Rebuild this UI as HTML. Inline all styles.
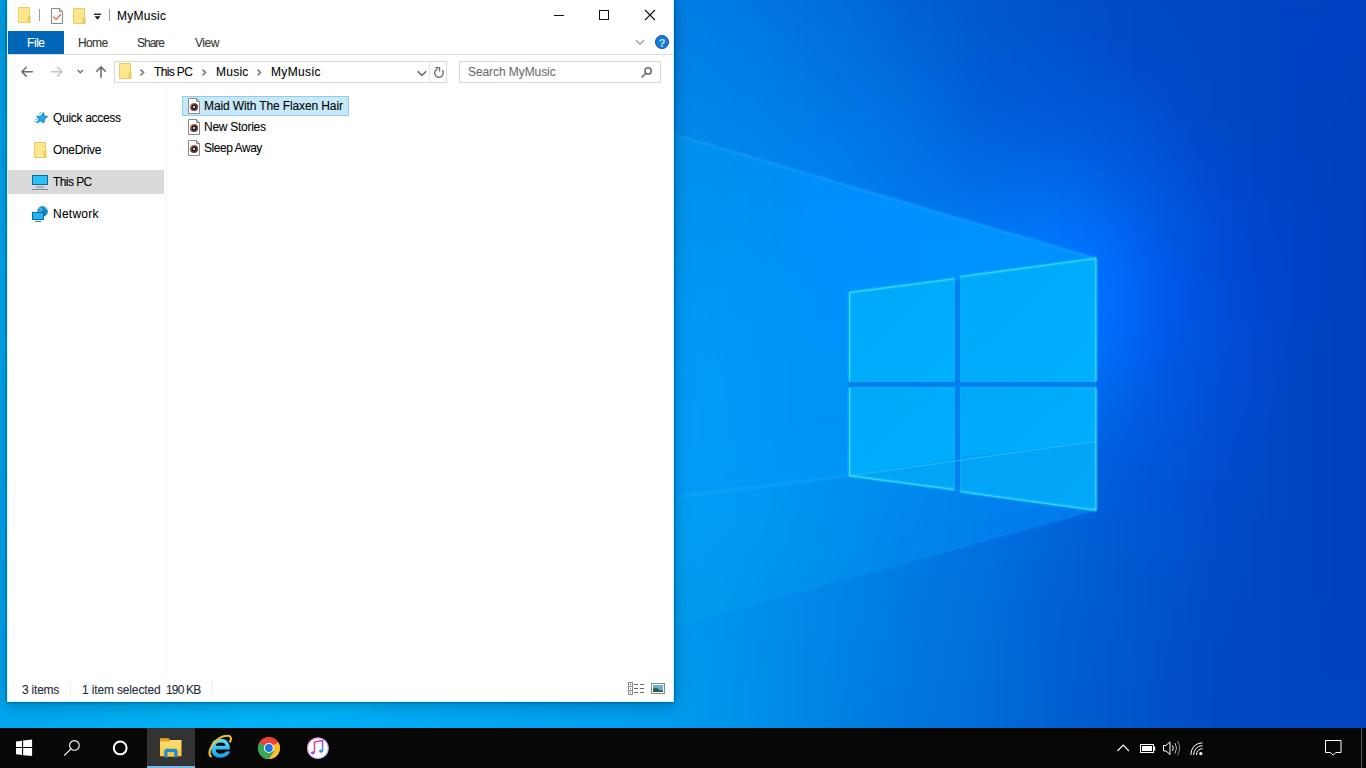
<!DOCTYPE html>
<html><head><meta charset="utf-8">
<style>
*{margin:0;padding:0;box-sizing:border-box}
html,body{width:1366px;height:768px;overflow:hidden;background:#0060d0}
body{position:relative;font-family:"Liberation Sans",sans-serif;font-size:12px;color:#000}
.a{position:absolute}
.t{position:absolute;white-space:nowrap;line-height:14px;font-size:12px;-webkit-text-stroke:0.08px currentColor}
#wall{position:absolute;left:0;top:0;width:1366px;height:728px}
#win{position:absolute;left:7px;top:-1px;width:667px;height:703px;background:#fff;border:1px solid #c8faff;box-shadow:0 0 2px 1px rgba(0,40,80,.38),0 3px 16px rgba(0,0,0,.26)}
#tb{position:absolute;left:0;top:728px;width:1366px;height:40px;background:#070707}
</style></head><body>
<svg id="wall" width="1366" height="728" viewBox="0 0 1366 728">
<defs>
<clipPath id="beamclip"><polygon points="-10,-65 1096,258.3 1096,510.4 849.9,475.8 -10,580"/></clipPath>
<clipPath id="wedgeclip"><polygon points="849.9,475.8 1096,510.4 -10,813 -10,580"/></clipPath>
<filter id="fblur" x="0" y="0" width="1366" height="728" filterUnits="userSpaceOnUse"><feGaussianBlur stdDeviation="18" edgeMode="duplicate"/></filter>
<linearGradient id="pane" x1="0" y1="0" x2="1" y2="1">
<stop offset="0" stop-color="#00a8f8"/>
<stop offset="1" stop-color="#00b0fe"/>
</linearGradient>
<filter id="b1" x="-20%" y="-20%" width="140%" height="140%"><feGaussianBlur stdDeviation="1.2"/></filter>
<filter id="b2" x="-20%" y="-20%" width="140%" height="140%"><feGaussianBlur stdDeviation="2.5"/></filter>
</defs>
<g filter="url(#fblur)"><rect x="-40" y="-40" width="40" height="40" fill="#0093ec"/><rect x="0" y="-40" width="40" height="40" fill="#0091eb"/><rect x="40" y="-40" width="40" height="40" fill="#0090ea"/><rect x="80" y="-40" width="40" height="40" fill="#008ee9"/><rect x="120" y="-40" width="40" height="40" fill="#008de9"/><rect x="160" y="-40" width="40" height="40" fill="#008ce8"/><rect x="200" y="-40" width="40" height="40" fill="#008ae8"/><rect x="240" y="-40" width="40" height="40" fill="#008ae7"/><rect x="280" y="-40" width="40" height="40" fill="#0089e7"/><rect x="320" y="-40" width="40" height="40" fill="#0088e6"/><rect x="360" y="-40" width="40" height="40" fill="#0087e6"/><rect x="400" y="-40" width="40" height="40" fill="#0086e6"/><rect x="440" y="-40" width="40" height="40" fill="#0086e6"/><rect x="480" y="-40" width="40" height="40" fill="#0084e5"/><rect x="520" y="-40" width="40" height="40" fill="#0083e5"/><rect x="560" y="-40" width="40" height="40" fill="#0081e5"/><rect x="600" y="-40" width="40" height="40" fill="#007fe5"/><rect x="640" y="-40" width="40" height="40" fill="#007de4"/><rect x="680" y="-40" width="40" height="40" fill="#007ae3"/><rect x="720" y="-40" width="40" height="40" fill="#0076e2"/><rect x="760" y="-40" width="40" height="40" fill="#0071e0"/><rect x="800" y="-40" width="40" height="40" fill="#006cdd"/><rect x="840" y="-40" width="40" height="40" fill="#0067da"/><rect x="880" y="-40" width="40" height="40" fill="#0061d6"/><rect x="920" y="-40" width="40" height="40" fill="#005cd3"/><rect x="960" y="-40" width="40" height="40" fill="#0057cf"/><rect x="1000" y="-40" width="40" height="40" fill="#0052cc"/><rect x="1040" y="-40" width="40" height="40" fill="#004eca"/><rect x="1080" y="-40" width="40" height="40" fill="#004bc8"/><rect x="1120" y="-40" width="40" height="40" fill="#0049c6"/><rect x="1160" y="-40" width="40" height="40" fill="#0047c5"/><rect x="1200" y="-40" width="40" height="40" fill="#0045c4"/><rect x="1240" y="-40" width="40" height="40" fill="#0043c4"/><rect x="1280" y="-40" width="40" height="40" fill="#0042c3"/><rect x="1320" y="-40" width="40" height="40" fill="#0040c2"/><rect x="1360" y="-40" width="40" height="40" fill="#003fc1"/><rect x="1400" y="-40" width="40" height="40" fill="#003cbe"/><rect x="-40" y="0" width="40" height="40" fill="#0095ed"/><rect x="0" y="0" width="40" height="40" fill="#0094ec"/><rect x="40" y="0" width="40" height="40" fill="#0092eb"/><rect x="80" y="0" width="40" height="40" fill="#0090ea"/><rect x="120" y="0" width="40" height="40" fill="#008fea"/><rect x="160" y="0" width="40" height="40" fill="#008ee9"/><rect x="200" y="0" width="40" height="40" fill="#008de8"/><rect x="240" y="0" width="40" height="40" fill="#008ce8"/><rect x="280" y="0" width="40" height="40" fill="#008be8"/><rect x="320" y="0" width="40" height="40" fill="#008be7"/><rect x="360" y="0" width="40" height="40" fill="#008ae7"/><rect x="400" y="0" width="40" height="40" fill="#0189e7"/><rect x="440" y="0" width="40" height="40" fill="#0188e7"/><rect x="480" y="0" width="40" height="40" fill="#0187e6"/><rect x="520" y="0" width="40" height="40" fill="#0186e6"/><rect x="560" y="0" width="40" height="40" fill="#0185e6"/><rect x="600" y="0" width="40" height="40" fill="#0183e6"/><rect x="640" y="0" width="40" height="40" fill="#0081e6"/><rect x="680" y="0" width="40" height="40" fill="#007ee5"/><rect x="720" y="0" width="40" height="40" fill="#007ae4"/><rect x="760" y="0" width="40" height="40" fill="#0075e2"/><rect x="800" y="0" width="40" height="40" fill="#0070e0"/><rect x="840" y="0" width="40" height="40" fill="#006bdd"/><rect x="880" y="0" width="40" height="40" fill="#0064d9"/><rect x="920" y="0" width="40" height="40" fill="#005ed5"/><rect x="960" y="0" width="40" height="40" fill="#0059d1"/><rect x="1000" y="0" width="40" height="40" fill="#0054ce"/><rect x="1040" y="0" width="40" height="40" fill="#0050cc"/><rect x="1080" y="0" width="40" height="40" fill="#004dca"/><rect x="1120" y="0" width="40" height="40" fill="#004ac8"/><rect x="1160" y="0" width="40" height="40" fill="#0048c6"/><rect x="1200" y="0" width="40" height="40" fill="#0046c5"/><rect x="1240" y="0" width="40" height="40" fill="#0044c4"/><rect x="1280" y="0" width="40" height="40" fill="#0042c4"/><rect x="1320" y="0" width="40" height="40" fill="#0041c3"/><rect x="1360" y="0" width="40" height="40" fill="#003fc1"/><rect x="1400" y="0" width="40" height="40" fill="#003cbe"/><rect x="-40" y="40" width="40" height="40" fill="#0098ee"/><rect x="0" y="40" width="40" height="40" fill="#0096ed"/><rect x="40" y="40" width="40" height="40" fill="#0094ec"/><rect x="80" y="40" width="40" height="40" fill="#0093eb"/><rect x="120" y="40" width="40" height="40" fill="#0091ea"/><rect x="160" y="40" width="40" height="40" fill="#0090ea"/><rect x="200" y="40" width="40" height="40" fill="#008fe9"/><rect x="240" y="40" width="40" height="40" fill="#008ee9"/><rect x="280" y="40" width="40" height="40" fill="#018ee9"/><rect x="320" y="40" width="40" height="40" fill="#018de8"/><rect x="360" y="40" width="40" height="40" fill="#018de8"/><rect x="400" y="40" width="40" height="40" fill="#028ce8"/><rect x="440" y="40" width="40" height="40" fill="#028be8"/><rect x="480" y="40" width="40" height="40" fill="#028ae7"/><rect x="520" y="40" width="40" height="40" fill="#0389e7"/><rect x="560" y="40" width="40" height="40" fill="#0388e7"/><rect x="600" y="40" width="40" height="40" fill="#0386e7"/><rect x="640" y="40" width="40" height="40" fill="#0284e6"/><rect x="680" y="40" width="40" height="40" fill="#0281e6"/><rect x="720" y="40" width="40" height="40" fill="#017de6"/><rect x="760" y="40" width="40" height="40" fill="#0079e5"/><rect x="800" y="40" width="40" height="40" fill="#0074e3"/><rect x="840" y="40" width="40" height="40" fill="#006ee0"/><rect x="880" y="40" width="40" height="40" fill="#0068dc"/><rect x="920" y="40" width="40" height="40" fill="#0062d8"/><rect x="960" y="40" width="40" height="40" fill="#005bd4"/><rect x="1000" y="40" width="40" height="40" fill="#0057d1"/><rect x="1040" y="40" width="40" height="40" fill="#0053cf"/><rect x="1080" y="40" width="40" height="40" fill="#0050cd"/><rect x="1120" y="40" width="40" height="40" fill="#004cca"/><rect x="1160" y="40" width="40" height="40" fill="#0049c7"/><rect x="1200" y="40" width="40" height="40" fill="#0046c5"/><rect x="1240" y="40" width="40" height="40" fill="#0044c4"/><rect x="1280" y="40" width="40" height="40" fill="#0042c3"/><rect x="1320" y="40" width="40" height="40" fill="#0040c2"/><rect x="1360" y="40" width="40" height="40" fill="#003ec0"/><rect x="1400" y="40" width="40" height="40" fill="#003cbe"/><rect x="-40" y="80" width="40" height="40" fill="#009aee"/><rect x="0" y="80" width="40" height="40" fill="#0098ee"/><rect x="40" y="80" width="40" height="40" fill="#0097ed"/><rect x="80" y="80" width="40" height="40" fill="#0095ec"/><rect x="120" y="80" width="40" height="40" fill="#0094eb"/><rect x="160" y="80" width="40" height="40" fill="#0093eb"/><rect x="200" y="80" width="40" height="40" fill="#0092ea"/><rect x="240" y="80" width="40" height="40" fill="#0191ea"/><rect x="280" y="80" width="40" height="40" fill="#0190ea"/><rect x="320" y="80" width="40" height="40" fill="#0290e9"/><rect x="360" y="80" width="40" height="40" fill="#028fe9"/><rect x="400" y="80" width="40" height="40" fill="#038fe9"/><rect x="440" y="80" width="40" height="40" fill="#038ee9"/><rect x="480" y="80" width="40" height="40" fill="#038de8"/><rect x="520" y="80" width="40" height="40" fill="#048ce8"/><rect x="560" y="80" width="40" height="40" fill="#048be8"/><rect x="600" y="80" width="40" height="40" fill="#0489e7"/><rect x="640" y="80" width="40" height="40" fill="#0487e7"/><rect x="680" y="80" width="40" height="40" fill="#0484e7"/><rect x="720" y="80" width="40" height="40" fill="#0381e7"/><rect x="760" y="80" width="40" height="40" fill="#007de8"/><rect x="800" y="80" width="40" height="40" fill="#0078e7"/><rect x="840" y="80" width="40" height="40" fill="#0073e4"/><rect x="880" y="80" width="40" height="40" fill="#006de0"/><rect x="920" y="80" width="40" height="40" fill="#0066db"/><rect x="960" y="80" width="40" height="40" fill="#005fd8"/><rect x="1000" y="80" width="40" height="40" fill="#005bd6"/><rect x="1040" y="80" width="40" height="40" fill="#0057d5"/><rect x="1080" y="80" width="40" height="40" fill="#0054d2"/><rect x="1120" y="80" width="40" height="40" fill="#0050ce"/><rect x="1160" y="80" width="40" height="40" fill="#004bca"/><rect x="1200" y="80" width="40" height="40" fill="#0047c6"/><rect x="1240" y="80" width="40" height="40" fill="#0044c4"/><rect x="1280" y="80" width="40" height="40" fill="#0042c3"/><rect x="1320" y="80" width="40" height="40" fill="#0040c1"/><rect x="1360" y="80" width="40" height="40" fill="#003ebf"/><rect x="1400" y="80" width="40" height="40" fill="#003bbd"/><rect x="-40" y="120" width="40" height="40" fill="#009cef"/><rect x="0" y="120" width="40" height="40" fill="#009bef"/><rect x="40" y="120" width="40" height="40" fill="#0099ee"/><rect x="80" y="120" width="40" height="40" fill="#0098ed"/><rect x="120" y="120" width="40" height="40" fill="#0096ec"/><rect x="160" y="120" width="40" height="40" fill="#0095ec"/><rect x="200" y="120" width="40" height="40" fill="#0194eb"/><rect x="240" y="120" width="40" height="40" fill="#0194eb"/><rect x="280" y="120" width="40" height="40" fill="#0293eb"/><rect x="320" y="120" width="40" height="40" fill="#0293ea"/><rect x="360" y="120" width="40" height="40" fill="#0392ea"/><rect x="400" y="120" width="40" height="40" fill="#0391ea"/><rect x="440" y="120" width="40" height="40" fill="#0491ea"/><rect x="480" y="120" width="40" height="40" fill="#0490e9"/><rect x="520" y="120" width="40" height="40" fill="#058fe9"/><rect x="560" y="120" width="40" height="40" fill="#058ee9"/><rect x="600" y="120" width="40" height="40" fill="#058ce9"/><rect x="640" y="120" width="40" height="40" fill="#068ae8"/><rect x="680" y="120" width="40" height="40" fill="#0588e9"/><rect x="720" y="120" width="40" height="40" fill="#0384ea"/><rect x="760" y="120" width="40" height="40" fill="#0081ed"/><rect x="800" y="120" width="40" height="40" fill="#007deb"/><rect x="840" y="120" width="40" height="40" fill="#0078e8"/><rect x="880" y="120" width="40" height="40" fill="#0072e4"/><rect x="920" y="120" width="40" height="40" fill="#006be0"/><rect x="960" y="120" width="40" height="40" fill="#0065dd"/><rect x="1000" y="120" width="40" height="40" fill="#0061dd"/><rect x="1040" y="120" width="40" height="40" fill="#005edd"/><rect x="1080" y="120" width="40" height="40" fill="#005ada"/><rect x="1120" y="120" width="40" height="40" fill="#0054d5"/><rect x="1160" y="120" width="40" height="40" fill="#004ece"/><rect x="1200" y="120" width="40" height="40" fill="#0049c8"/><rect x="1240" y="120" width="40" height="40" fill="#0045c5"/><rect x="1280" y="120" width="40" height="40" fill="#0042c3"/><rect x="1320" y="120" width="40" height="40" fill="#003fc0"/><rect x="1360" y="120" width="40" height="40" fill="#003dbe"/><rect x="1400" y="120" width="40" height="40" fill="#003bbc"/><rect x="-40" y="160" width="40" height="40" fill="#009ff0"/><rect x="0" y="160" width="40" height="40" fill="#009def"/><rect x="40" y="160" width="40" height="40" fill="#009cef"/><rect x="80" y="160" width="40" height="40" fill="#009aee"/><rect x="120" y="160" width="40" height="40" fill="#0099ed"/><rect x="160" y="160" width="40" height="40" fill="#0198ed"/><rect x="200" y="160" width="40" height="40" fill="#0197ec"/><rect x="240" y="160" width="40" height="40" fill="#0296ec"/><rect x="280" y="160" width="40" height="40" fill="#0296ec"/><rect x="320" y="160" width="40" height="40" fill="#0395eb"/><rect x="360" y="160" width="40" height="40" fill="#0395eb"/><rect x="400" y="160" width="40" height="40" fill="#0494eb"/><rect x="440" y="160" width="40" height="40" fill="#0493eb"/><rect x="480" y="160" width="40" height="40" fill="#0593eb"/><rect x="520" y="160" width="40" height="40" fill="#0592ea"/><rect x="560" y="160" width="40" height="40" fill="#0690ea"/><rect x="600" y="160" width="40" height="40" fill="#068fea"/><rect x="640" y="160" width="40" height="40" fill="#068deb"/><rect x="680" y="160" width="40" height="40" fill="#058aec"/><rect x="720" y="160" width="40" height="40" fill="#0288ee"/><rect x="760" y="160" width="40" height="40" fill="#0084f0"/><rect x="800" y="160" width="40" height="40" fill="#0081ef"/><rect x="840" y="160" width="40" height="40" fill="#007cec"/><rect x="880" y="160" width="40" height="40" fill="#0077e9"/><rect x="920" y="160" width="40" height="40" fill="#0071e6"/><rect x="960" y="160" width="40" height="40" fill="#006be4"/><rect x="1000" y="160" width="40" height="40" fill="#0069e6"/><rect x="1040" y="160" width="40" height="40" fill="#0067e9"/><rect x="1080" y="160" width="40" height="40" fill="#0061e6"/><rect x="1120" y="160" width="40" height="40" fill="#0059de"/><rect x="1160" y="160" width="40" height="40" fill="#0051d5"/><rect x="1200" y="160" width="40" height="40" fill="#004acd"/><rect x="1240" y="160" width="40" height="40" fill="#0045c8"/><rect x="1280" y="160" width="40" height="40" fill="#0042c4"/><rect x="1320" y="160" width="40" height="40" fill="#003fc0"/><rect x="1360" y="160" width="40" height="40" fill="#003dbd"/><rect x="1400" y="160" width="40" height="40" fill="#003abb"/><rect x="-40" y="200" width="40" height="40" fill="#00a1f1"/><rect x="0" y="200" width="40" height="40" fill="#00a0f0"/><rect x="40" y="200" width="40" height="40" fill="#009ef0"/><rect x="80" y="200" width="40" height="40" fill="#009def"/><rect x="120" y="200" width="40" height="40" fill="#019cee"/><rect x="160" y="200" width="40" height="40" fill="#019bee"/><rect x="200" y="200" width="40" height="40" fill="#029aed"/><rect x="240" y="200" width="40" height="40" fill="#0299ed"/><rect x="280" y="200" width="40" height="40" fill="#0298ed"/><rect x="320" y="200" width="40" height="40" fill="#0398ec"/><rect x="360" y="200" width="40" height="40" fill="#0497ec"/><rect x="400" y="200" width="40" height="40" fill="#0496ec"/><rect x="440" y="200" width="40" height="40" fill="#0496ec"/><rect x="480" y="200" width="40" height="40" fill="#0595ec"/><rect x="520" y="200" width="40" height="40" fill="#0594ec"/><rect x="560" y="200" width="40" height="40" fill="#0693ec"/><rect x="600" y="200" width="40" height="40" fill="#0591ec"/><rect x="640" y="200" width="40" height="40" fill="#058fed"/><rect x="680" y="200" width="40" height="40" fill="#048dee"/><rect x="720" y="200" width="40" height="40" fill="#028af0"/><rect x="760" y="200" width="40" height="40" fill="#0087f1"/><rect x="800" y="200" width="40" height="40" fill="#0084f1"/><rect x="840" y="200" width="40" height="40" fill="#0080f0"/><rect x="880" y="200" width="40" height="40" fill="#007cef"/><rect x="920" y="200" width="40" height="40" fill="#0078ee"/><rect x="960" y="200" width="40" height="40" fill="#0074ef"/><rect x="1000" y="200" width="40" height="40" fill="#0073f3"/><rect x="1040" y="200" width="40" height="40" fill="#0071f7"/><rect x="1080" y="200" width="40" height="40" fill="#0069f2"/><rect x="1120" y="200" width="40" height="40" fill="#005ee8"/><rect x="1160" y="200" width="40" height="40" fill="#0054dd"/><rect x="1200" y="200" width="40" height="40" fill="#004cd3"/><rect x="1240" y="200" width="40" height="40" fill="#0046cb"/><rect x="1280" y="200" width="40" height="40" fill="#0042c5"/><rect x="1320" y="200" width="40" height="40" fill="#003fc1"/><rect x="1360" y="200" width="40" height="40" fill="#003cbd"/><rect x="1400" y="200" width="40" height="40" fill="#003aba"/><rect x="-40" y="240" width="40" height="40" fill="#00a3f2"/><rect x="0" y="240" width="40" height="40" fill="#00a2f1"/><rect x="40" y="240" width="40" height="40" fill="#00a1f1"/><rect x="80" y="240" width="40" height="40" fill="#009ff0"/><rect x="120" y="240" width="40" height="40" fill="#019eef"/><rect x="160" y="240" width="40" height="40" fill="#019def"/><rect x="200" y="240" width="40" height="40" fill="#029cee"/><rect x="240" y="240" width="40" height="40" fill="#029bee"/><rect x="280" y="240" width="40" height="40" fill="#039bee"/><rect x="320" y="240" width="40" height="40" fill="#039aed"/><rect x="360" y="240" width="40" height="40" fill="#0499ed"/><rect x="400" y="240" width="40" height="40" fill="#0499ed"/><rect x="440" y="240" width="40" height="40" fill="#0598ed"/><rect x="480" y="240" width="40" height="40" fill="#0597ed"/><rect x="520" y="240" width="40" height="40" fill="#0596ed"/><rect x="560" y="240" width="40" height="40" fill="#0595ee"/><rect x="600" y="240" width="40" height="40" fill="#0593ee"/><rect x="640" y="240" width="40" height="40" fill="#0491ef"/><rect x="680" y="240" width="40" height="40" fill="#038ff0"/><rect x="720" y="240" width="40" height="40" fill="#028df2"/><rect x="760" y="240" width="40" height="40" fill="#018af3"/><rect x="800" y="240" width="40" height="40" fill="#0087f4"/><rect x="840" y="240" width="40" height="40" fill="#0084f4"/><rect x="880" y="240" width="40" height="40" fill="#0081f4"/><rect x="920" y="240" width="40" height="40" fill="#007ef5"/><rect x="960" y="240" width="40" height="40" fill="#007cf9"/><rect x="1000" y="240" width="40" height="40" fill="#007cff"/><rect x="1040" y="240" width="40" height="40" fill="#0079ff"/><rect x="1080" y="240" width="40" height="40" fill="#006ffc"/><rect x="1120" y="240" width="40" height="40" fill="#0061f0"/><rect x="1160" y="240" width="40" height="40" fill="#0055e3"/><rect x="1200" y="240" width="40" height="40" fill="#004cd7"/><rect x="1240" y="240" width="40" height="40" fill="#0047ce"/><rect x="1280" y="240" width="40" height="40" fill="#0042c6"/><rect x="1320" y="240" width="40" height="40" fill="#003fc1"/><rect x="1360" y="240" width="40" height="40" fill="#003cbd"/><rect x="1400" y="240" width="40" height="40" fill="#003ab9"/><rect x="-40" y="280" width="40" height="40" fill="#00a6f3"/><rect x="0" y="280" width="40" height="40" fill="#00a4f2"/><rect x="40" y="280" width="40" height="40" fill="#00a3f2"/><rect x="80" y="280" width="40" height="40" fill="#01a2f1"/><rect x="120" y="280" width="40" height="40" fill="#01a1f0"/><rect x="160" y="280" width="40" height="40" fill="#01a0f0"/><rect x="200" y="280" width="40" height="40" fill="#029fef"/><rect x="240" y="280" width="40" height="40" fill="#029eef"/><rect x="280" y="280" width="40" height="40" fill="#039def"/><rect x="320" y="280" width="40" height="40" fill="#039cee"/><rect x="360" y="280" width="40" height="40" fill="#049cee"/><rect x="400" y="280" width="40" height="40" fill="#049bee"/><rect x="440" y="280" width="40" height="40" fill="#049aee"/><rect x="480" y="280" width="40" height="40" fill="#0599ee"/><rect x="520" y="280" width="40" height="40" fill="#0598ee"/><rect x="560" y="280" width="40" height="40" fill="#0597ef"/><rect x="600" y="280" width="40" height="40" fill="#0495ef"/><rect x="640" y="280" width="40" height="40" fill="#0493f0"/><rect x="680" y="280" width="40" height="40" fill="#0391f1"/><rect x="720" y="280" width="40" height="40" fill="#028ff3"/><rect x="760" y="280" width="40" height="40" fill="#018cf4"/><rect x="800" y="280" width="40" height="40" fill="#008af5"/><rect x="840" y="280" width="40" height="40" fill="#0087f6"/><rect x="880" y="280" width="40" height="40" fill="#0084f7"/><rect x="920" y="280" width="40" height="40" fill="#0082fa"/><rect x="960" y="280" width="40" height="40" fill="#0080fe"/><rect x="1000" y="280" width="40" height="40" fill="#007eff"/><rect x="1040" y="280" width="40" height="40" fill="#007aff"/><rect x="1080" y="280" width="40" height="40" fill="#0072ff"/><rect x="1120" y="280" width="40" height="40" fill="#0062f3"/><rect x="1160" y="280" width="40" height="40" fill="#0055e5"/><rect x="1200" y="280" width="40" height="40" fill="#004dd9"/><rect x="1240" y="280" width="40" height="40" fill="#0047cf"/><rect x="1280" y="280" width="40" height="40" fill="#0043c7"/><rect x="1320" y="280" width="40" height="40" fill="#0040c1"/><rect x="1360" y="280" width="40" height="40" fill="#003dbc"/><rect x="1400" y="280" width="40" height="40" fill="#003ab9"/><rect x="-40" y="320" width="40" height="40" fill="#00a8f4"/><rect x="0" y="320" width="40" height="40" fill="#00a7f3"/><rect x="40" y="320" width="40" height="40" fill="#00a6f3"/><rect x="80" y="320" width="40" height="40" fill="#01a4f2"/><rect x="120" y="320" width="40" height="40" fill="#01a3f1"/><rect x="160" y="320" width="40" height="40" fill="#02a2f1"/><rect x="200" y="320" width="40" height="40" fill="#02a1f0"/><rect x="240" y="320" width="40" height="40" fill="#02a0f0"/><rect x="280" y="320" width="40" height="40" fill="#039ff0"/><rect x="320" y="320" width="40" height="40" fill="#039fef"/><rect x="360" y="320" width="40" height="40" fill="#039eef"/><rect x="400" y="320" width="40" height="40" fill="#049def"/><rect x="440" y="320" width="40" height="40" fill="#049cef"/><rect x="480" y="320" width="40" height="40" fill="#049bef"/><rect x="520" y="320" width="40" height="40" fill="#049aef"/><rect x="560" y="320" width="40" height="40" fill="#0498f0"/><rect x="600" y="320" width="40" height="40" fill="#0497f0"/><rect x="640" y="320" width="40" height="40" fill="#0395f1"/><rect x="680" y="320" width="40" height="40" fill="#0393f2"/><rect x="720" y="320" width="40" height="40" fill="#0290f3"/><rect x="760" y="320" width="40" height="40" fill="#018ef4"/><rect x="800" y="320" width="40" height="40" fill="#008bf5"/><rect x="840" y="320" width="40" height="40" fill="#0088f6"/><rect x="880" y="320" width="40" height="40" fill="#0086f8"/><rect x="920" y="320" width="40" height="40" fill="#0083fa"/><rect x="960" y="320" width="40" height="40" fill="#0081fd"/><rect x="1000" y="320" width="40" height="40" fill="#007dff"/><rect x="1040" y="320" width="40" height="40" fill="#0078ff"/><rect x="1080" y="320" width="40" height="40" fill="#006ffb"/><rect x="1120" y="320" width="40" height="40" fill="#0061f0"/><rect x="1160" y="320" width="40" height="40" fill="#0056e4"/><rect x="1200" y="320" width="40" height="40" fill="#004dd8"/><rect x="1240" y="320" width="40" height="40" fill="#0048ce"/><rect x="1280" y="320" width="40" height="40" fill="#0044c6"/><rect x="1320" y="320" width="40" height="40" fill="#0040c0"/><rect x="1360" y="320" width="40" height="40" fill="#003dbc"/><rect x="1400" y="320" width="40" height="40" fill="#003ab8"/><rect x="-40" y="360" width="40" height="40" fill="#00abf5"/><rect x="0" y="360" width="40" height="40" fill="#00a9f4"/><rect x="40" y="360" width="40" height="40" fill="#01a8f4"/><rect x="80" y="360" width="40" height="40" fill="#01a7f3"/><rect x="120" y="360" width="40" height="40" fill="#01a5f2"/><rect x="160" y="360" width="40" height="40" fill="#02a4f2"/><rect x="200" y="360" width="40" height="40" fill="#02a3f1"/><rect x="240" y="360" width="40" height="40" fill="#02a2f1"/><rect x="280" y="360" width="40" height="40" fill="#03a2f1"/><rect x="320" y="360" width="40" height="40" fill="#03a1f0"/><rect x="360" y="360" width="40" height="40" fill="#03a0f0"/><rect x="400" y="360" width="40" height="40" fill="#039ff0"/><rect x="440" y="360" width="40" height="40" fill="#049ef0"/><rect x="480" y="360" width="40" height="40" fill="#049df0"/><rect x="520" y="360" width="40" height="40" fill="#049bf0"/><rect x="560" y="360" width="40" height="40" fill="#049af0"/><rect x="600" y="360" width="40" height="40" fill="#0398f1"/><rect x="640" y="360" width="40" height="40" fill="#0396f1"/><rect x="680" y="360" width="40" height="40" fill="#0294f2"/><rect x="720" y="360" width="40" height="40" fill="#0291f3"/><rect x="760" y="360" width="40" height="40" fill="#018ef3"/><rect x="800" y="360" width="40" height="40" fill="#008cf4"/><rect x="840" y="360" width="40" height="40" fill="#0089f5"/><rect x="880" y="360" width="40" height="40" fill="#0085f6"/><rect x="920" y="360" width="40" height="40" fill="#0082f7"/><rect x="960" y="360" width="40" height="40" fill="#007ff8"/><rect x="1000" y="360" width="40" height="40" fill="#007af9"/><rect x="1040" y="360" width="40" height="40" fill="#0073f7"/><rect x="1080" y="360" width="40" height="40" fill="#006af2"/><rect x="1120" y="360" width="40" height="40" fill="#005fe9"/><rect x="1160" y="360" width="40" height="40" fill="#0055df"/><rect x="1200" y="360" width="40" height="40" fill="#004ed5"/><rect x="1240" y="360" width="40" height="40" fill="#0048cc"/><rect x="1280" y="360" width="40" height="40" fill="#0044c4"/><rect x="1320" y="360" width="40" height="40" fill="#0041bf"/><rect x="1360" y="360" width="40" height="40" fill="#003dbb"/><rect x="1400" y="360" width="40" height="40" fill="#003bb8"/><rect x="-40" y="400" width="40" height="40" fill="#00adf6"/><rect x="0" y="400" width="40" height="40" fill="#00abf5"/><rect x="40" y="400" width="40" height="40" fill="#01aaf4"/><rect x="80" y="400" width="40" height="40" fill="#01a9f4"/><rect x="120" y="400" width="40" height="40" fill="#01a8f3"/><rect x="160" y="400" width="40" height="40" fill="#01a7f3"/><rect x="200" y="400" width="40" height="40" fill="#02a6f2"/><rect x="240" y="400" width="40" height="40" fill="#02a5f2"/><rect x="280" y="400" width="40" height="40" fill="#02a4f1"/><rect x="320" y="400" width="40" height="40" fill="#03a3f1"/><rect x="360" y="400" width="40" height="40" fill="#03a2f1"/><rect x="400" y="400" width="40" height="40" fill="#03a1f1"/><rect x="440" y="400" width="40" height="40" fill="#039ff1"/><rect x="480" y="400" width="40" height="40" fill="#039ef1"/><rect x="520" y="400" width="40" height="40" fill="#039df1"/><rect x="560" y="400" width="40" height="40" fill="#039bf1"/><rect x="600" y="400" width="40" height="40" fill="#0399f1"/><rect x="640" y="400" width="40" height="40" fill="#0297f1"/><rect x="680" y="400" width="40" height="40" fill="#0294f1"/><rect x="720" y="400" width="40" height="40" fill="#0192f2"/><rect x="760" y="400" width="40" height="40" fill="#018ff2"/><rect x="800" y="400" width="40" height="40" fill="#008bf2"/><rect x="840" y="400" width="40" height="40" fill="#0088f2"/><rect x="880" y="400" width="40" height="40" fill="#0084f2"/><rect x="920" y="400" width="40" height="40" fill="#0080f2"/><rect x="960" y="400" width="40" height="40" fill="#007bf2"/><rect x="1000" y="400" width="40" height="40" fill="#0075f0"/><rect x="1040" y="400" width="40" height="40" fill="#006eed"/><rect x="1080" y="400" width="40" height="40" fill="#0065e7"/><rect x="1120" y="400" width="40" height="40" fill="#005ce1"/><rect x="1160" y="400" width="40" height="40" fill="#0054d9"/><rect x="1200" y="400" width="40" height="40" fill="#004dd1"/><rect x="1240" y="400" width="40" height="40" fill="#0049ca"/><rect x="1280" y="400" width="40" height="40" fill="#0045c3"/><rect x="1320" y="400" width="40" height="40" fill="#0041be"/><rect x="1360" y="400" width="40" height="40" fill="#003ebb"/><rect x="1400" y="400" width="40" height="40" fill="#003bb8"/><rect x="-40" y="440" width="40" height="40" fill="#00aff7"/><rect x="0" y="440" width="40" height="40" fill="#00aef6"/><rect x="40" y="440" width="40" height="40" fill="#01acf5"/><rect x="80" y="440" width="40" height="40" fill="#01abf5"/><rect x="120" y="440" width="40" height="40" fill="#01aaf4"/><rect x="160" y="440" width="40" height="40" fill="#01a9f4"/><rect x="200" y="440" width="40" height="40" fill="#02a8f3"/><rect x="240" y="440" width="40" height="40" fill="#02a6f3"/><rect x="280" y="440" width="40" height="40" fill="#02a5f2"/><rect x="320" y="440" width="40" height="40" fill="#02a4f2"/><rect x="360" y="440" width="40" height="40" fill="#03a3f2"/><rect x="400" y="440" width="40" height="40" fill="#03a2f1"/><rect x="440" y="440" width="40" height="40" fill="#03a1f1"/><rect x="480" y="440" width="40" height="40" fill="#039ff1"/><rect x="520" y="440" width="40" height="40" fill="#039ef1"/><rect x="560" y="440" width="40" height="40" fill="#029cf1"/><rect x="600" y="440" width="40" height="40" fill="#029af1"/><rect x="640" y="440" width="40" height="40" fill="#0298f1"/><rect x="680" y="440" width="40" height="40" fill="#0195f1"/><rect x="720" y="440" width="40" height="40" fill="#0192f0"/><rect x="760" y="440" width="40" height="40" fill="#018ef0"/><rect x="800" y="440" width="40" height="40" fill="#008bf0"/><rect x="840" y="440" width="40" height="40" fill="#0087ef"/><rect x="880" y="440" width="40" height="40" fill="#0082ee"/><rect x="920" y="440" width="40" height="40" fill="#007ded"/><rect x="960" y="440" width="40" height="40" fill="#0078eb"/><rect x="1000" y="440" width="40" height="40" fill="#0071e8"/><rect x="1040" y="440" width="40" height="40" fill="#0069e4"/><rect x="1080" y="440" width="40" height="40" fill="#0061df"/><rect x="1120" y="440" width="40" height="40" fill="#0059d9"/><rect x="1160" y="440" width="40" height="40" fill="#0052d4"/><rect x="1200" y="440" width="40" height="40" fill="#004dce"/><rect x="1240" y="440" width="40" height="40" fill="#0048c8"/><rect x="1280" y="440" width="40" height="40" fill="#0044c2"/><rect x="1320" y="440" width="40" height="40" fill="#0041be"/><rect x="1360" y="440" width="40" height="40" fill="#003ebb"/><rect x="1400" y="440" width="40" height="40" fill="#003bb8"/><rect x="-40" y="480" width="40" height="40" fill="#00b1f8"/><rect x="0" y="480" width="40" height="40" fill="#00b0f7"/><rect x="40" y="480" width="40" height="40" fill="#01aef6"/><rect x="80" y="480" width="40" height="40" fill="#01adf6"/><rect x="120" y="480" width="40" height="40" fill="#01acf5"/><rect x="160" y="480" width="40" height="40" fill="#01abf4"/><rect x="200" y="480" width="40" height="40" fill="#01a9f4"/><rect x="240" y="480" width="40" height="40" fill="#02a8f3"/><rect x="280" y="480" width="40" height="40" fill="#02a7f3"/><rect x="320" y="480" width="40" height="40" fill="#02a6f3"/><rect x="360" y="480" width="40" height="40" fill="#02a5f2"/><rect x="400" y="480" width="40" height="40" fill="#02a3f2"/><rect x="440" y="480" width="40" height="40" fill="#02a2f2"/><rect x="480" y="480" width="40" height="40" fill="#02a1f1"/><rect x="520" y="480" width="40" height="40" fill="#029ff1"/><rect x="560" y="480" width="40" height="40" fill="#029df1"/><rect x="600" y="480" width="40" height="40" fill="#029bf0"/><rect x="640" y="480" width="40" height="40" fill="#0198f0"/><rect x="680" y="480" width="40" height="40" fill="#0195ef"/><rect x="720" y="480" width="40" height="40" fill="#0191ef"/><rect x="760" y="480" width="40" height="40" fill="#008eee"/><rect x="800" y="480" width="40" height="40" fill="#0089ed"/><rect x="840" y="480" width="40" height="40" fill="#0085eb"/><rect x="880" y="480" width="40" height="40" fill="#0080ea"/><rect x="920" y="480" width="40" height="40" fill="#007ae7"/><rect x="960" y="480" width="40" height="40" fill="#0074e4"/><rect x="1000" y="480" width="40" height="40" fill="#006ee1"/><rect x="1040" y="480" width="40" height="40" fill="#0066dd"/><rect x="1080" y="480" width="40" height="40" fill="#005ed9"/><rect x="1120" y="480" width="40" height="40" fill="#0057d4"/><rect x="1160" y="480" width="40" height="40" fill="#0051d0"/><rect x="1200" y="480" width="40" height="40" fill="#004ccb"/><rect x="1240" y="480" width="40" height="40" fill="#0048c6"/><rect x="1280" y="480" width="40" height="40" fill="#0044c2"/><rect x="1320" y="480" width="40" height="40" fill="#0041bf"/><rect x="1360" y="480" width="40" height="40" fill="#003ebc"/><rect x="1400" y="480" width="40" height="40" fill="#003cb9"/><rect x="-40" y="520" width="40" height="40" fill="#00b3f8"/><rect x="0" y="520" width="40" height="40" fill="#00b2f8"/><rect x="40" y="520" width="40" height="40" fill="#00b0f7"/><rect x="80" y="520" width="40" height="40" fill="#01aff6"/><rect x="120" y="520" width="40" height="40" fill="#01aef6"/><rect x="160" y="520" width="40" height="40" fill="#01acf5"/><rect x="200" y="520" width="40" height="40" fill="#01abf5"/><rect x="240" y="520" width="40" height="40" fill="#01aaf4"/><rect x="280" y="520" width="40" height="40" fill="#02a9f4"/><rect x="320" y="520" width="40" height="40" fill="#02a7f3"/><rect x="360" y="520" width="40" height="40" fill="#02a6f3"/><rect x="400" y="520" width="40" height="40" fill="#02a5f2"/><rect x="440" y="520" width="40" height="40" fill="#02a3f2"/><rect x="480" y="520" width="40" height="40" fill="#02a2f1"/><rect x="520" y="520" width="40" height="40" fill="#01a0f1"/><rect x="560" y="520" width="40" height="40" fill="#019ef1"/><rect x="600" y="520" width="40" height="40" fill="#019bf0"/><rect x="640" y="520" width="40" height="40" fill="#0198ef"/><rect x="680" y="520" width="40" height="40" fill="#0095ee"/><rect x="720" y="520" width="40" height="40" fill="#0091ed"/><rect x="760" y="520" width="40" height="40" fill="#008dec"/><rect x="800" y="520" width="40" height="40" fill="#0088ea"/><rect x="840" y="520" width="40" height="40" fill="#0083e8"/><rect x="880" y="520" width="40" height="40" fill="#007ee6"/><rect x="920" y="520" width="40" height="40" fill="#0078e2"/><rect x="960" y="520" width="40" height="40" fill="#0072df"/><rect x="1000" y="520" width="40" height="40" fill="#006bdb"/><rect x="1040" y="520" width="40" height="40" fill="#0064d8"/><rect x="1080" y="520" width="40" height="40" fill="#005dd5"/><rect x="1120" y="520" width="40" height="40" fill="#0056d1"/><rect x="1160" y="520" width="40" height="40" fill="#0051ce"/><rect x="1200" y="520" width="40" height="40" fill="#004bca"/><rect x="1240" y="520" width="40" height="40" fill="#0047c6"/><rect x="1280" y="520" width="40" height="40" fill="#0044c2"/><rect x="1320" y="520" width="40" height="40" fill="#0041bf"/><rect x="1360" y="520" width="40" height="40" fill="#003ebc"/><rect x="1400" y="520" width="40" height="40" fill="#003cba"/><rect x="-40" y="560" width="40" height="40" fill="#00b5f9"/><rect x="0" y="560" width="40" height="40" fill="#00b4f8"/><rect x="40" y="560" width="40" height="40" fill="#00b2f8"/><rect x="80" y="560" width="40" height="40" fill="#01b1f7"/><rect x="120" y="560" width="40" height="40" fill="#01b0f6"/><rect x="160" y="560" width="40" height="40" fill="#01aef6"/><rect x="200" y="560" width="40" height="40" fill="#01adf5"/><rect x="240" y="560" width="40" height="40" fill="#01acf5"/><rect x="280" y="560" width="40" height="40" fill="#01aaf4"/><rect x="320" y="560" width="40" height="40" fill="#01a9f4"/><rect x="360" y="560" width="40" height="40" fill="#01a7f3"/><rect x="400" y="560" width="40" height="40" fill="#01a6f3"/><rect x="440" y="560" width="40" height="40" fill="#01a4f2"/><rect x="480" y="560" width="40" height="40" fill="#01a2f2"/><rect x="520" y="560" width="40" height="40" fill="#01a1f1"/><rect x="560" y="560" width="40" height="40" fill="#019ef0"/><rect x="600" y="560" width="40" height="40" fill="#019cf0"/><rect x="640" y="560" width="40" height="40" fill="#0099ef"/><rect x="680" y="560" width="40" height="40" fill="#0095ed"/><rect x="720" y="560" width="40" height="40" fill="#0091ec"/><rect x="760" y="560" width="40" height="40" fill="#008cea"/><rect x="800" y="560" width="40" height="40" fill="#0087e8"/><rect x="840" y="560" width="40" height="40" fill="#0081e5"/><rect x="880" y="560" width="40" height="40" fill="#007ce2"/><rect x="920" y="560" width="40" height="40" fill="#0076df"/><rect x="960" y="560" width="40" height="40" fill="#0070dc"/><rect x="1000" y="560" width="40" height="40" fill="#0069d8"/><rect x="1040" y="560" width="40" height="40" fill="#0062d5"/><rect x="1080" y="560" width="40" height="40" fill="#005cd2"/><rect x="1120" y="560" width="40" height="40" fill="#0055cf"/><rect x="1160" y="560" width="40" height="40" fill="#0050cc"/><rect x="1200" y="560" width="40" height="40" fill="#004bc8"/><rect x="1240" y="560" width="40" height="40" fill="#0047c5"/><rect x="1280" y="560" width="40" height="40" fill="#0044c2"/><rect x="1320" y="560" width="40" height="40" fill="#0041c0"/><rect x="1360" y="560" width="40" height="40" fill="#003fbe"/><rect x="1400" y="560" width="40" height="40" fill="#003dbb"/><rect x="-40" y="600" width="40" height="40" fill="#00b7fa"/><rect x="0" y="600" width="40" height="40" fill="#00b5f9"/><rect x="40" y="600" width="40" height="40" fill="#00b4f9"/><rect x="80" y="600" width="40" height="40" fill="#00b3f8"/><rect x="120" y="600" width="40" height="40" fill="#01b1f7"/><rect x="160" y="600" width="40" height="40" fill="#01b0f6"/><rect x="200" y="600" width="40" height="40" fill="#01aef6"/><rect x="240" y="600" width="40" height="40" fill="#01adf5"/><rect x="280" y="600" width="40" height="40" fill="#01acf5"/><rect x="320" y="600" width="40" height="40" fill="#01aaf4"/><rect x="360" y="600" width="40" height="40" fill="#01a9f4"/><rect x="400" y="600" width="40" height="40" fill="#01a7f3"/><rect x="440" y="600" width="40" height="40" fill="#01a5f2"/><rect x="480" y="600" width="40" height="40" fill="#01a3f2"/><rect x="520" y="600" width="40" height="40" fill="#00a1f1"/><rect x="560" y="600" width="40" height="40" fill="#009ff0"/><rect x="600" y="600" width="40" height="40" fill="#009def"/><rect x="640" y="600" width="40" height="40" fill="#009aee"/><rect x="680" y="600" width="40" height="40" fill="#0096ed"/><rect x="720" y="600" width="40" height="40" fill="#0091eb"/><rect x="760" y="600" width="40" height="40" fill="#008ce9"/><rect x="800" y="600" width="40" height="40" fill="#0086e6"/><rect x="840" y="600" width="40" height="40" fill="#0080e3"/><rect x="880" y="600" width="40" height="40" fill="#007ae0"/><rect x="920" y="600" width="40" height="40" fill="#0074dd"/><rect x="960" y="600" width="40" height="40" fill="#006eda"/><rect x="1000" y="600" width="40" height="40" fill="#0068d7"/><rect x="1040" y="600" width="40" height="40" fill="#0061d3"/><rect x="1080" y="600" width="40" height="40" fill="#005bd0"/><rect x="1120" y="600" width="40" height="40" fill="#0054cd"/><rect x="1160" y="600" width="40" height="40" fill="#004fca"/><rect x="1200" y="600" width="40" height="40" fill="#004ac7"/><rect x="1240" y="600" width="40" height="40" fill="#0047c4"/><rect x="1280" y="600" width="40" height="40" fill="#0044c3"/><rect x="1320" y="600" width="40" height="40" fill="#0042c1"/><rect x="1360" y="600" width="40" height="40" fill="#0040bf"/><rect x="1400" y="600" width="40" height="40" fill="#003dbc"/><rect x="-40" y="640" width="40" height="40" fill="#00b9fb"/><rect x="0" y="640" width="40" height="40" fill="#00b7fa"/><rect x="40" y="640" width="40" height="40" fill="#00b6f9"/><rect x="80" y="640" width="40" height="40" fill="#00b4f8"/><rect x="120" y="640" width="40" height="40" fill="#00b3f8"/><rect x="160" y="640" width="40" height="40" fill="#01b1f7"/><rect x="200" y="640" width="40" height="40" fill="#01b0f6"/><rect x="240" y="640" width="40" height="40" fill="#01aef6"/><rect x="280" y="640" width="40" height="40" fill="#01adf5"/><rect x="320" y="640" width="40" height="40" fill="#01abf5"/><rect x="360" y="640" width="40" height="40" fill="#01aaf4"/><rect x="400" y="640" width="40" height="40" fill="#01a8f3"/><rect x="440" y="640" width="40" height="40" fill="#00a6f3"/><rect x="480" y="640" width="40" height="40" fill="#00a4f2"/><rect x="520" y="640" width="40" height="40" fill="#00a2f1"/><rect x="560" y="640" width="40" height="40" fill="#00a0f0"/><rect x="600" y="640" width="40" height="40" fill="#009eef"/><rect x="640" y="640" width="40" height="40" fill="#009bee"/><rect x="680" y="640" width="40" height="40" fill="#0097ec"/><rect x="720" y="640" width="40" height="40" fill="#0091ea"/><rect x="760" y="640" width="40" height="40" fill="#008be7"/><rect x="800" y="640" width="40" height="40" fill="#0085e5"/><rect x="840" y="640" width="40" height="40" fill="#007fe2"/><rect x="880" y="640" width="40" height="40" fill="#0079df"/><rect x="920" y="640" width="40" height="40" fill="#0073dc"/><rect x="960" y="640" width="40" height="40" fill="#006dd9"/><rect x="1000" y="640" width="40" height="40" fill="#0067d5"/><rect x="1040" y="640" width="40" height="40" fill="#0060d2"/><rect x="1080" y="640" width="40" height="40" fill="#005ace"/><rect x="1120" y="640" width="40" height="40" fill="#0054cb"/><rect x="1160" y="640" width="40" height="40" fill="#004ec8"/><rect x="1200" y="640" width="40" height="40" fill="#004ac6"/><rect x="1240" y="640" width="40" height="40" fill="#0047c4"/><rect x="1280" y="640" width="40" height="40" fill="#0044c3"/><rect x="1320" y="640" width="40" height="40" fill="#0042c1"/><rect x="1360" y="640" width="40" height="40" fill="#0041c0"/><rect x="1400" y="640" width="40" height="40" fill="#003fbe"/><rect x="-40" y="680" width="40" height="40" fill="#00bafb"/><rect x="0" y="680" width="40" height="40" fill="#00b9fb"/><rect x="40" y="680" width="40" height="40" fill="#00b7fa"/><rect x="80" y="680" width="40" height="40" fill="#00b6f9"/><rect x="120" y="680" width="40" height="40" fill="#00b4f8"/><rect x="160" y="680" width="40" height="40" fill="#00b3f8"/><rect x="200" y="680" width="40" height="40" fill="#00b1f7"/><rect x="240" y="680" width="40" height="40" fill="#00b0f6"/><rect x="280" y="680" width="40" height="40" fill="#00aef6"/><rect x="320" y="680" width="40" height="40" fill="#00acf5"/><rect x="360" y="680" width="40" height="40" fill="#00abf4"/><rect x="400" y="680" width="40" height="40" fill="#00a9f3"/><rect x="440" y="680" width="40" height="40" fill="#00a7f3"/><rect x="480" y="680" width="40" height="40" fill="#00a5f2"/><rect x="520" y="680" width="40" height="40" fill="#00a3f1"/><rect x="560" y="680" width="40" height="40" fill="#00a0f0"/><rect x="600" y="680" width="40" height="40" fill="#009eef"/><rect x="640" y="680" width="40" height="40" fill="#009cee"/><rect x="680" y="680" width="40" height="40" fill="#0098ec"/><rect x="720" y="680" width="40" height="40" fill="#0092ea"/><rect x="760" y="680" width="40" height="40" fill="#008be7"/><rect x="800" y="680" width="40" height="40" fill="#0085e4"/><rect x="840" y="680" width="40" height="40" fill="#007ee1"/><rect x="880" y="680" width="40" height="40" fill="#0078de"/><rect x="920" y="680" width="40" height="40" fill="#0072db"/><rect x="960" y="680" width="40" height="40" fill="#006cd8"/><rect x="1000" y="680" width="40" height="40" fill="#0066d4"/><rect x="1040" y="680" width="40" height="40" fill="#0060d1"/><rect x="1080" y="680" width="40" height="40" fill="#0059cd"/><rect x="1120" y="680" width="40" height="40" fill="#0053ca"/><rect x="1160" y="680" width="40" height="40" fill="#004ec7"/><rect x="1200" y="680" width="40" height="40" fill="#004ac5"/><rect x="1240" y="680" width="40" height="40" fill="#0047c4"/><rect x="1280" y="680" width="40" height="40" fill="#0045c3"/><rect x="1320" y="680" width="40" height="40" fill="#0044c2"/><rect x="1360" y="680" width="40" height="40" fill="#0042c0"/><rect x="1400" y="680" width="40" height="40" fill="#0040bf"/><rect x="-40" y="720" width="40" height="40" fill="#00bcfc"/><rect x="0" y="720" width="40" height="40" fill="#00bbfb"/><rect x="40" y="720" width="40" height="40" fill="#00b9fa"/><rect x="80" y="720" width="40" height="40" fill="#00b7fa"/><rect x="120" y="720" width="40" height="40" fill="#00b6f9"/><rect x="160" y="720" width="40" height="40" fill="#00b4f8"/><rect x="200" y="720" width="40" height="40" fill="#00b3f7"/><rect x="240" y="720" width="40" height="40" fill="#00b1f7"/><rect x="280" y="720" width="40" height="40" fill="#00aff6"/><rect x="320" y="720" width="40" height="40" fill="#00adf5"/><rect x="360" y="720" width="40" height="40" fill="#00acf4"/><rect x="400" y="720" width="40" height="40" fill="#00aaf4"/><rect x="440" y="720" width="40" height="40" fill="#00a8f3"/><rect x="480" y="720" width="40" height="40" fill="#00a5f2"/><rect x="520" y="720" width="40" height="40" fill="#00a3f1"/><rect x="560" y="720" width="40" height="40" fill="#00a1f0"/><rect x="600" y="720" width="40" height="40" fill="#009fef"/><rect x="640" y="720" width="40" height="40" fill="#009dee"/><rect x="680" y="720" width="40" height="40" fill="#0098ec"/><rect x="720" y="720" width="40" height="40" fill="#0092e9"/><rect x="760" y="720" width="40" height="40" fill="#008ce6"/><rect x="800" y="720" width="40" height="40" fill="#0085e3"/><rect x="840" y="720" width="40" height="40" fill="#007ee0"/><rect x="880" y="720" width="40" height="40" fill="#0078dd"/><rect x="920" y="720" width="40" height="40" fill="#0072da"/><rect x="960" y="720" width="40" height="40" fill="#006cd7"/><rect x="1000" y="720" width="40" height="40" fill="#0066d3"/><rect x="1040" y="720" width="40" height="40" fill="#0060d0"/><rect x="1080" y="720" width="40" height="40" fill="#005acd"/><rect x="1120" y="720" width="40" height="40" fill="#0054c9"/><rect x="1160" y="720" width="40" height="40" fill="#004fc7"/><rect x="1200" y="720" width="40" height="40" fill="#004bc5"/><rect x="1240" y="720" width="40" height="40" fill="#0048c4"/><rect x="1280" y="720" width="40" height="40" fill="#0046c3"/><rect x="1320" y="720" width="40" height="40" fill="#0045c2"/><rect x="1360" y="720" width="40" height="40" fill="#0043c1"/><rect x="1400" y="720" width="40" height="40" fill="#0041bf"/><rect x="-40" y="760" width="40" height="40" fill="#00befd"/><rect x="0" y="760" width="40" height="40" fill="#00bcfc"/><rect x="40" y="760" width="40" height="40" fill="#00bafb"/><rect x="80" y="760" width="40" height="40" fill="#00b9fa"/><rect x="120" y="760" width="40" height="40" fill="#00b7f9"/><rect x="160" y="760" width="40" height="40" fill="#00b6f9"/><rect x="200" y="760" width="40" height="40" fill="#00b4f8"/><rect x="240" y="760" width="40" height="40" fill="#00b2f7"/><rect x="280" y="760" width="40" height="40" fill="#00b0f6"/><rect x="320" y="760" width="40" height="40" fill="#00aef6"/><rect x="360" y="760" width="40" height="40" fill="#00adf5"/><rect x="400" y="760" width="40" height="40" fill="#00aaf4"/><rect x="440" y="760" width="40" height="40" fill="#00a8f3"/><rect x="480" y="760" width="40" height="40" fill="#00a6f2"/><rect x="520" y="760" width="40" height="40" fill="#00a4f1"/><rect x="560" y="760" width="40" height="40" fill="#00a2f0"/><rect x="600" y="760" width="40" height="40" fill="#009fef"/><rect x="640" y="760" width="40" height="40" fill="#009ced"/><rect x="680" y="760" width="40" height="40" fill="#0098eb"/><rect x="720" y="760" width="40" height="40" fill="#0092e9"/><rect x="760" y="760" width="40" height="40" fill="#008ce6"/><rect x="800" y="760" width="40" height="40" fill="#0085e3"/><rect x="840" y="760" width="40" height="40" fill="#007fe0"/><rect x="880" y="760" width="40" height="40" fill="#0078dd"/><rect x="920" y="760" width="40" height="40" fill="#0072d9"/><rect x="960" y="760" width="40" height="40" fill="#006cd6"/><rect x="1000" y="760" width="40" height="40" fill="#0066d3"/><rect x="1040" y="760" width="40" height="40" fill="#0060d0"/><rect x="1080" y="760" width="40" height="40" fill="#005acc"/><rect x="1120" y="760" width="40" height="40" fill="#0055ca"/><rect x="1160" y="760" width="40" height="40" fill="#0050c7"/><rect x="1200" y="760" width="40" height="40" fill="#004dc5"/><rect x="1240" y="760" width="40" height="40" fill="#004ac4"/><rect x="1280" y="760" width="40" height="40" fill="#0048c3"/><rect x="1320" y="760" width="40" height="40" fill="#0046c2"/><rect x="1360" y="760" width="40" height="40" fill="#0044c1"/><rect x="1400" y="760" width="40" height="40" fill="#0042c0"/></g><g clip-path="url(#wedgeclip)"><g filter="url(#fblur)"><rect x="-40" y="440" width="40" height="40" fill="#029fee"/><rect x="0" y="440" width="40" height="40" fill="#02a0ef"/><rect x="40" y="440" width="40" height="40" fill="#02a1f0"/><rect x="80" y="440" width="40" height="40" fill="#03a3f2"/><rect x="120" y="440" width="40" height="40" fill="#03a5f3"/><rect x="160" y="440" width="40" height="40" fill="#04a6f4"/><rect x="200" y="440" width="40" height="40" fill="#04a8f6"/><rect x="240" y="440" width="40" height="40" fill="#05a9f7"/><rect x="280" y="440" width="40" height="40" fill="#05aaf8"/><rect x="320" y="440" width="40" height="40" fill="#06aaf9"/><rect x="360" y="440" width="40" height="40" fill="#06aaf9"/><rect x="400" y="440" width="40" height="40" fill="#06aaf9"/><rect x="440" y="440" width="40" height="40" fill="#06a9f9"/><rect x="480" y="440" width="40" height="40" fill="#07a8f9"/><rect x="520" y="440" width="40" height="40" fill="#07a6f9"/><rect x="560" y="440" width="40" height="40" fill="#07a4f8"/><rect x="600" y="440" width="40" height="40" fill="#07a2f8"/><rect x="640" y="440" width="40" height="40" fill="#07a0f7"/><rect x="680" y="440" width="40" height="40" fill="#079df7"/><rect x="720" y="440" width="40" height="40" fill="#069bf5"/><rect x="760" y="440" width="40" height="40" fill="#0597f4"/><rect x="800" y="440" width="40" height="40" fill="#0493f1"/><rect x="840" y="440" width="40" height="40" fill="#038ef0"/><rect x="880" y="440" width="40" height="40" fill="#038aef"/><rect x="920" y="440" width="40" height="40" fill="#0286ef"/><rect x="960" y="440" width="40" height="40" fill="#0282ef"/><rect x="1000" y="440" width="40" height="40" fill="#027fee"/><rect x="1040" y="440" width="40" height="40" fill="#017bed"/><rect x="1080" y="440" width="40" height="40" fill="#0178eb"/><rect x="1120" y="440" width="40" height="40" fill="#0174ea"/><rect x="1160" y="440" width="40" height="40" fill="#0171e9"/><rect x="-40" y="480" width="40" height="40" fill="#019fee"/><rect x="0" y="480" width="40" height="40" fill="#01a0ef"/><rect x="40" y="480" width="40" height="40" fill="#01a2f0"/><rect x="80" y="480" width="40" height="40" fill="#02a4f1"/><rect x="120" y="480" width="40" height="40" fill="#02a6f3"/><rect x="160" y="480" width="40" height="40" fill="#03a8f4"/><rect x="200" y="480" width="40" height="40" fill="#03a9f6"/><rect x="240" y="480" width="40" height="40" fill="#04aaf7"/><rect x="280" y="480" width="40" height="40" fill="#04abf8"/><rect x="320" y="480" width="40" height="40" fill="#05acf8"/><rect x="360" y="480" width="40" height="40" fill="#05abf9"/><rect x="400" y="480" width="40" height="40" fill="#05abf9"/><rect x="440" y="480" width="40" height="40" fill="#05aaf9"/><rect x="480" y="480" width="40" height="40" fill="#05a8f8"/><rect x="520" y="480" width="40" height="40" fill="#06a7f8"/><rect x="560" y="480" width="40" height="40" fill="#06a5f7"/><rect x="600" y="480" width="40" height="40" fill="#06a2f6"/><rect x="640" y="480" width="40" height="40" fill="#06a0f6"/><rect x="680" y="480" width="40" height="40" fill="#059df5"/><rect x="720" y="480" width="40" height="40" fill="#059af4"/><rect x="760" y="480" width="40" height="40" fill="#0497f1"/><rect x="800" y="480" width="40" height="40" fill="#0292ef"/><rect x="840" y="480" width="40" height="40" fill="#018ded"/><rect x="880" y="480" width="40" height="40" fill="#0188ed"/><rect x="920" y="480" width="40" height="40" fill="#0184ed"/><rect x="960" y="480" width="40" height="40" fill="#0181ed"/><rect x="1000" y="480" width="40" height="40" fill="#007eed"/><rect x="1040" y="480" width="40" height="40" fill="#007bec"/><rect x="1080" y="480" width="40" height="40" fill="#0077ea"/><rect x="1120" y="480" width="40" height="40" fill="#0073e8"/><rect x="1160" y="480" width="40" height="40" fill="#0070e7"/><rect x="-40" y="520" width="40" height="40" fill="#00a0ed"/><rect x="0" y="520" width="40" height="40" fill="#00a1ee"/><rect x="40" y="520" width="40" height="40" fill="#01a3ef"/><rect x="80" y="520" width="40" height="40" fill="#01a5f1"/><rect x="120" y="520" width="40" height="40" fill="#02a7f3"/><rect x="160" y="520" width="40" height="40" fill="#02a9f4"/><rect x="200" y="520" width="40" height="40" fill="#03abf5"/><rect x="240" y="520" width="40" height="40" fill="#03acf7"/><rect x="280" y="520" width="40" height="40" fill="#03adf8"/><rect x="320" y="520" width="40" height="40" fill="#04adf8"/><rect x="360" y="520" width="40" height="40" fill="#04adf8"/><rect x="400" y="520" width="40" height="40" fill="#04acf8"/><rect x="440" y="520" width="40" height="40" fill="#04abf8"/><rect x="480" y="520" width="40" height="40" fill="#04a9f7"/><rect x="520" y="520" width="40" height="40" fill="#04a7f7"/><rect x="560" y="520" width="40" height="40" fill="#04a5f6"/><rect x="600" y="520" width="40" height="40" fill="#04a2f5"/><rect x="640" y="520" width="40" height="40" fill="#049ff3"/><rect x="680" y="520" width="40" height="40" fill="#039df2"/><rect x="720" y="520" width="40" height="40" fill="#039af1"/><rect x="760" y="520" width="40" height="40" fill="#0196ee"/><rect x="800" y="520" width="40" height="40" fill="#0091ec"/><rect x="840" y="520" width="40" height="40" fill="#008ceb"/><rect x="880" y="520" width="40" height="40" fill="#0086eb"/><rect x="920" y="520" width="40" height="40" fill="#0083eb"/><rect x="960" y="520" width="40" height="40" fill="#0080eb"/><rect x="1000" y="520" width="40" height="40" fill="#007deb"/><rect x="1040" y="520" width="40" height="40" fill="#007aea"/><rect x="1080" y="520" width="40" height="40" fill="#0076e8"/><rect x="1120" y="520" width="40" height="40" fill="#0073e7"/><rect x="1160" y="520" width="40" height="40" fill="#0070e6"/><rect x="-40" y="560" width="40" height="40" fill="#00a0ed"/><rect x="0" y="560" width="40" height="40" fill="#00a2ee"/><rect x="40" y="560" width="40" height="40" fill="#00a4ef"/><rect x="80" y="560" width="40" height="40" fill="#01a6f1"/><rect x="120" y="560" width="40" height="40" fill="#01a8f3"/><rect x="160" y="560" width="40" height="40" fill="#01aaf4"/><rect x="200" y="560" width="40" height="40" fill="#02acf6"/><rect x="240" y="560" width="40" height="40" fill="#02aef7"/><rect x="280" y="560" width="40" height="40" fill="#02aef8"/><rect x="320" y="560" width="40" height="40" fill="#03aff8"/><rect x="360" y="560" width="40" height="40" fill="#03aef8"/><rect x="400" y="560" width="40" height="40" fill="#03adf8"/><rect x="440" y="560" width="40" height="40" fill="#03acf7"/><rect x="480" y="560" width="40" height="40" fill="#03aaf6"/><rect x="520" y="560" width="40" height="40" fill="#03a7f5"/><rect x="560" y="560" width="40" height="40" fill="#02a5f4"/><rect x="600" y="560" width="40" height="40" fill="#02a2f3"/><rect x="640" y="560" width="40" height="40" fill="#029ff1"/><rect x="680" y="560" width="40" height="40" fill="#019bef"/><rect x="720" y="560" width="40" height="40" fill="#0098ee"/><rect x="760" y="560" width="40" height="40" fill="#0094ec"/><rect x="800" y="560" width="40" height="40" fill="#0090ea"/><rect x="840" y="560" width="40" height="40" fill="#008ae9"/><rect x="880" y="560" width="40" height="40" fill="#0085e9"/><rect x="920" y="560" width="40" height="40" fill="#0081e9"/><rect x="960" y="560" width="40" height="40" fill="#007fe9"/><rect x="1000" y="560" width="40" height="40" fill="#007ce9"/><rect x="1040" y="560" width="40" height="40" fill="#0079e8"/><rect x="1080" y="560" width="40" height="40" fill="#0075e6"/><rect x="1120" y="560" width="40" height="40" fill="#0072e5"/><rect x="1160" y="560" width="40" height="40" fill="#006fe4"/><rect x="-40" y="600" width="40" height="40" fill="#00a1ed"/><rect x="0" y="600" width="40" height="40" fill="#00a3ee"/><rect x="40" y="600" width="40" height="40" fill="#00a5f0"/><rect x="80" y="600" width="40" height="40" fill="#00a7f1"/><rect x="120" y="600" width="40" height="40" fill="#01aaf3"/><rect x="160" y="600" width="40" height="40" fill="#01acf4"/><rect x="200" y="600" width="40" height="40" fill="#01aef6"/><rect x="240" y="600" width="40" height="40" fill="#01aff7"/><rect x="280" y="600" width="40" height="40" fill="#02b0f8"/><rect x="320" y="600" width="40" height="40" fill="#02b0f8"/><rect x="360" y="600" width="40" height="40" fill="#02b0f8"/><rect x="400" y="600" width="40" height="40" fill="#02aef7"/><rect x="440" y="600" width="40" height="40" fill="#02acf6"/><rect x="480" y="600" width="40" height="40" fill="#01aaf5"/><rect x="520" y="600" width="40" height="40" fill="#01a8f4"/><rect x="560" y="600" width="40" height="40" fill="#01a5f2"/><rect x="600" y="600" width="40" height="40" fill="#00a1f1"/><rect x="640" y="600" width="40" height="40" fill="#009eef"/><rect x="680" y="600" width="40" height="40" fill="#009aed"/><rect x="720" y="600" width="40" height="40" fill="#0097eb"/><rect x="760" y="600" width="40" height="40" fill="#0093ea"/><rect x="800" y="600" width="40" height="40" fill="#008ee8"/><rect x="840" y="600" width="40" height="40" fill="#0089e7"/><rect x="880" y="600" width="40" height="40" fill="#0085e7"/><rect x="920" y="600" width="40" height="40" fill="#0081e7"/><rect x="960" y="600" width="40" height="40" fill="#007ee7"/><rect x="1000" y="600" width="40" height="40" fill="#007be6"/><rect x="1040" y="600" width="40" height="40" fill="#0078e6"/><rect x="1080" y="600" width="40" height="40" fill="#0075e5"/><rect x="1120" y="600" width="40" height="40" fill="#0072e4"/><rect x="1160" y="600" width="40" height="40" fill="#006fe3"/><rect x="-40" y="640" width="40" height="40" fill="#00a3ee"/><rect x="0" y="640" width="40" height="40" fill="#00a5ef"/><rect x="40" y="640" width="40" height="40" fill="#00a7f0"/><rect x="80" y="640" width="40" height="40" fill="#00a9f2"/><rect x="120" y="640" width="40" height="40" fill="#00abf3"/><rect x="160" y="640" width="40" height="40" fill="#00adf4"/><rect x="200" y="640" width="40" height="40" fill="#01aff6"/><rect x="240" y="640" width="40" height="40" fill="#01b1f7"/><rect x="280" y="640" width="40" height="40" fill="#01b2f8"/><rect x="320" y="640" width="40" height="40" fill="#01b2f8"/><rect x="360" y="640" width="40" height="40" fill="#01b1f7"/><rect x="400" y="640" width="40" height="40" fill="#01aff7"/><rect x="440" y="640" width="40" height="40" fill="#00adf6"/><rect x="480" y="640" width="40" height="40" fill="#00abf4"/><rect x="520" y="640" width="40" height="40" fill="#00a8f3"/><rect x="560" y="640" width="40" height="40" fill="#00a4f1"/><rect x="600" y="640" width="40" height="40" fill="#00a1ef"/><rect x="640" y="640" width="40" height="40" fill="#009ded"/><rect x="680" y="640" width="40" height="40" fill="#009aeb"/><rect x="720" y="640" width="40" height="40" fill="#0096ea"/><rect x="760" y="640" width="40" height="40" fill="#0092e8"/><rect x="800" y="640" width="40" height="40" fill="#008de7"/><rect x="840" y="640" width="40" height="40" fill="#0089e6"/><rect x="880" y="640" width="40" height="40" fill="#0085e5"/><rect x="920" y="640" width="40" height="40" fill="#0081e5"/><rect x="960" y="640" width="40" height="40" fill="#007de5"/><rect x="1000" y="640" width="40" height="40" fill="#007ae5"/><rect x="1040" y="640" width="40" height="40" fill="#0077e4"/><rect x="1080" y="640" width="40" height="40" fill="#0075e3"/><rect x="1120" y="640" width="40" height="40" fill="#0072e2"/><rect x="1160" y="640" width="40" height="40" fill="#006fe1"/><rect x="-40" y="680" width="40" height="40" fill="#00a5ef"/><rect x="0" y="680" width="40" height="40" fill="#00a6f0"/><rect x="40" y="680" width="40" height="40" fill="#00a8f1"/><rect x="80" y="680" width="40" height="40" fill="#00aaf2"/><rect x="120" y="680" width="40" height="40" fill="#00adf3"/><rect x="160" y="680" width="40" height="40" fill="#00aff4"/><rect x="200" y="680" width="40" height="40" fill="#00b1f6"/><rect x="240" y="680" width="40" height="40" fill="#00b2f7"/><rect x="280" y="680" width="40" height="40" fill="#00b3f8"/><rect x="320" y="680" width="40" height="40" fill="#00b3f8"/><rect x="360" y="680" width="40" height="40" fill="#00b2f7"/><rect x="400" y="680" width="40" height="40" fill="#00b0f6"/><rect x="440" y="680" width="40" height="40" fill="#00aef5"/><rect x="480" y="680" width="40" height="40" fill="#00abf3"/><rect x="520" y="680" width="40" height="40" fill="#00a8f2"/><rect x="560" y="680" width="40" height="40" fill="#00a4f0"/><rect x="600" y="680" width="40" height="40" fill="#00a1ee"/><rect x="640" y="680" width="40" height="40" fill="#009dec"/><rect x="680" y="680" width="40" height="40" fill="#0099ea"/><rect x="720" y="680" width="40" height="40" fill="#0095e8"/><rect x="760" y="680" width="40" height="40" fill="#0091e7"/><rect x="800" y="680" width="40" height="40" fill="#008de6"/><rect x="840" y="680" width="40" height="40" fill="#0089e5"/><rect x="880" y="680" width="40" height="40" fill="#0085e4"/><rect x="920" y="680" width="40" height="40" fill="#0081e4"/><rect x="960" y="680" width="40" height="40" fill="#007de3"/><rect x="1000" y="680" width="40" height="40" fill="#007ae3"/><rect x="1040" y="680" width="40" height="40" fill="#0077e2"/><rect x="1080" y="680" width="40" height="40" fill="#0074e2"/><rect x="1120" y="680" width="40" height="40" fill="#0071e1"/><rect x="1160" y="680" width="40" height="40" fill="#006fe0"/><rect x="-40" y="720" width="40" height="40" fill="#00a6ef"/><rect x="0" y="720" width="40" height="40" fill="#00a8f0"/><rect x="40" y="720" width="40" height="40" fill="#00aaf1"/><rect x="80" y="720" width="40" height="40" fill="#00acf2"/><rect x="120" y="720" width="40" height="40" fill="#00aef3"/><rect x="160" y="720" width="40" height="40" fill="#00b0f4"/><rect x="200" y="720" width="40" height="40" fill="#00b1f6"/><rect x="240" y="720" width="40" height="40" fill="#00b3f7"/><rect x="280" y="720" width="40" height="40" fill="#00b4f7"/><rect x="320" y="720" width="40" height="40" fill="#00b3f7"/><rect x="360" y="720" width="40" height="40" fill="#00b2f6"/><rect x="400" y="720" width="40" height="40" fill="#00b0f5"/><rect x="440" y="720" width="40" height="40" fill="#00aef4"/><rect x="480" y="720" width="40" height="40" fill="#00abf2"/><rect x="520" y="720" width="40" height="40" fill="#00a8f1"/><rect x="560" y="720" width="40" height="40" fill="#00a4ef"/><rect x="600" y="720" width="40" height="40" fill="#00a1ed"/><rect x="640" y="720" width="40" height="40" fill="#009deb"/><rect x="680" y="720" width="40" height="40" fill="#0099e9"/><rect x="720" y="720" width="40" height="40" fill="#0095e7"/><rect x="760" y="720" width="40" height="40" fill="#0091e6"/><rect x="800" y="720" width="40" height="40" fill="#008de5"/><rect x="840" y="720" width="40" height="40" fill="#0089e4"/><rect x="880" y="720" width="40" height="40" fill="#0085e3"/><rect x="920" y="720" width="40" height="40" fill="#0081e2"/><rect x="960" y="720" width="40" height="40" fill="#007ee2"/><rect x="1000" y="720" width="40" height="40" fill="#007ae1"/><rect x="1040" y="720" width="40" height="40" fill="#0077e1"/><rect x="1080" y="720" width="40" height="40" fill="#0074e0"/><rect x="1120" y="720" width="40" height="40" fill="#0071e0"/><rect x="1160" y="720" width="40" height="40" fill="#006fdf"/><rect x="-40" y="760" width="40" height="40" fill="#00a8f0"/><rect x="0" y="760" width="40" height="40" fill="#00a9f1"/><rect x="40" y="760" width="40" height="40" fill="#00abf1"/><rect x="80" y="760" width="40" height="40" fill="#00adf2"/><rect x="120" y="760" width="40" height="40" fill="#00aff3"/><rect x="160" y="760" width="40" height="40" fill="#00b0f4"/><rect x="200" y="760" width="40" height="40" fill="#00b2f5"/><rect x="240" y="760" width="40" height="40" fill="#00b3f6"/><rect x="280" y="760" width="40" height="40" fill="#00b4f6"/><rect x="320" y="760" width="40" height="40" fill="#00b3f6"/><rect x="360" y="760" width="40" height="40" fill="#00b2f5"/><rect x="400" y="760" width="40" height="40" fill="#00b0f4"/><rect x="440" y="760" width="40" height="40" fill="#00aef3"/><rect x="480" y="760" width="40" height="40" fill="#00abf1"/><rect x="520" y="760" width="40" height="40" fill="#00a8f0"/><rect x="560" y="760" width="40" height="40" fill="#00a4ee"/><rect x="600" y="760" width="40" height="40" fill="#00a1ec"/><rect x="640" y="760" width="40" height="40" fill="#009dea"/><rect x="680" y="760" width="40" height="40" fill="#0099e8"/><rect x="720" y="760" width="40" height="40" fill="#0095e7"/><rect x="760" y="760" width="40" height="40" fill="#0091e5"/><rect x="800" y="760" width="40" height="40" fill="#008de4"/><rect x="840" y="760" width="40" height="40" fill="#0089e3"/><rect x="880" y="760" width="40" height="40" fill="#0085e2"/><rect x="920" y="760" width="40" height="40" fill="#0081e1"/><rect x="960" y="760" width="40" height="40" fill="#007ee1"/><rect x="1000" y="760" width="40" height="40" fill="#007be0"/><rect x="1040" y="760" width="40" height="40" fill="#0077e0"/><rect x="1080" y="760" width="40" height="40" fill="#0075df"/><rect x="1120" y="760" width="40" height="40" fill="#0072de"/><rect x="1160" y="760" width="40" height="40" fill="#006fde"/><rect x="-40" y="800" width="40" height="40" fill="#00a9f0"/><rect x="0" y="800" width="40" height="40" fill="#00abf0"/><rect x="40" y="800" width="40" height="40" fill="#00acf1"/><rect x="80" y="800" width="40" height="40" fill="#00aef2"/><rect x="120" y="800" width="40" height="40" fill="#00aff3"/><rect x="160" y="800" width="40" height="40" fill="#00b1f4"/><rect x="200" y="800" width="40" height="40" fill="#00b2f5"/><rect x="240" y="800" width="40" height="40" fill="#00b3f5"/><rect x="280" y="800" width="40" height="40" fill="#00b3f5"/><rect x="320" y="800" width="40" height="40" fill="#00b3f5"/><rect x="360" y="800" width="40" height="40" fill="#00b1f4"/><rect x="400" y="800" width="40" height="40" fill="#00b0f3"/><rect x="440" y="800" width="40" height="40" fill="#00adf2"/><rect x="480" y="800" width="40" height="40" fill="#00aaf0"/><rect x="520" y="800" width="40" height="40" fill="#00a7ef"/><rect x="560" y="800" width="40" height="40" fill="#00a4ed"/><rect x="600" y="800" width="40" height="40" fill="#00a0eb"/><rect x="640" y="800" width="40" height="40" fill="#009de9"/><rect x="680" y="800" width="40" height="40" fill="#0099e7"/><rect x="720" y="800" width="40" height="40" fill="#0095e6"/><rect x="760" y="800" width="40" height="40" fill="#0091e4"/><rect x="800" y="800" width="40" height="40" fill="#008de3"/><rect x="840" y="800" width="40" height="40" fill="#0089e2"/><rect x="880" y="800" width="40" height="40" fill="#0085e1"/><rect x="920" y="800" width="40" height="40" fill="#0082e0"/><rect x="960" y="800" width="40" height="40" fill="#007ee0"/><rect x="1000" y="800" width="40" height="40" fill="#007bdf"/><rect x="1040" y="800" width="40" height="40" fill="#0078de"/><rect x="1080" y="800" width="40" height="40" fill="#0075de"/><rect x="1120" y="800" width="40" height="40" fill="#0072dd"/><rect x="1160" y="800" width="40" height="40" fill="#006fdd"/></g></g><g clip-path="url(#beamclip)"><g filter="url(#fblur)"><rect x="-40" y="-120" width="40" height="40" fill="#009be6"/><rect x="0" y="-120" width="40" height="40" fill="#009ae6"/><rect x="40" y="-120" width="40" height="40" fill="#009ae6"/><rect x="80" y="-120" width="40" height="40" fill="#0099e6"/><rect x="120" y="-120" width="40" height="40" fill="#0098e6"/><rect x="160" y="-120" width="40" height="40" fill="#0098e6"/><rect x="200" y="-120" width="40" height="40" fill="#0097e6"/><rect x="240" y="-120" width="40" height="40" fill="#0096e5"/><rect x="280" y="-120" width="40" height="40" fill="#0095e5"/><rect x="320" y="-120" width="40" height="40" fill="#0094e5"/><rect x="360" y="-120" width="40" height="40" fill="#0093e5"/><rect x="400" y="-120" width="40" height="40" fill="#0092e5"/><rect x="440" y="-120" width="40" height="40" fill="#0090e6"/><rect x="480" y="-120" width="40" height="40" fill="#008fe6"/><rect x="520" y="-120" width="40" height="40" fill="#008ee7"/><rect x="560" y="-120" width="40" height="40" fill="#008de7"/><rect x="600" y="-120" width="40" height="40" fill="#008ce8"/><rect x="640" y="-120" width="40" height="40" fill="#008bea"/><rect x="680" y="-120" width="40" height="40" fill="#008aeb"/><rect x="720" y="-120" width="40" height="40" fill="#0089ed"/><rect x="760" y="-120" width="40" height="40" fill="#0088ef"/><rect x="800" y="-120" width="40" height="40" fill="#0088f2"/><rect x="840" y="-120" width="40" height="40" fill="#0087f4"/><rect x="880" y="-120" width="40" height="40" fill="#0087f6"/><rect x="920" y="-120" width="40" height="40" fill="#0087f7"/><rect x="960" y="-120" width="40" height="40" fill="#0087f9"/><rect x="1000" y="-120" width="40" height="40" fill="#0087fa"/><rect x="1040" y="-120" width="40" height="40" fill="#0086fb"/><rect x="1080" y="-120" width="40" height="40" fill="#0086fc"/><rect x="1120" y="-120" width="40" height="40" fill="#0085fd"/><rect x="1160" y="-120" width="40" height="40" fill="#0085fe"/><rect x="-40" y="-80" width="40" height="40" fill="#009ce7"/><rect x="0" y="-80" width="40" height="40" fill="#009ce7"/><rect x="40" y="-80" width="40" height="40" fill="#009be7"/><rect x="80" y="-80" width="40" height="40" fill="#009ae7"/><rect x="120" y="-80" width="40" height="40" fill="#009ae7"/><rect x="160" y="-80" width="40" height="40" fill="#0099e6"/><rect x="200" y="-80" width="40" height="40" fill="#0098e6"/><rect x="240" y="-80" width="40" height="40" fill="#0097e6"/><rect x="280" y="-80" width="40" height="40" fill="#0096e6"/><rect x="320" y="-80" width="40" height="40" fill="#0095e6"/><rect x="360" y="-80" width="40" height="40" fill="#0094e6"/><rect x="400" y="-80" width="40" height="40" fill="#0093e6"/><rect x="440" y="-80" width="40" height="40" fill="#0092e6"/><rect x="480" y="-80" width="40" height="40" fill="#0090e6"/><rect x="520" y="-80" width="40" height="40" fill="#008fe7"/><rect x="560" y="-80" width="40" height="40" fill="#008ee7"/><rect x="600" y="-80" width="40" height="40" fill="#008de8"/><rect x="640" y="-80" width="40" height="40" fill="#008cea"/><rect x="680" y="-80" width="40" height="40" fill="#008bec"/><rect x="720" y="-80" width="40" height="40" fill="#008aee"/><rect x="760" y="-80" width="40" height="40" fill="#0089f0"/><rect x="800" y="-80" width="40" height="40" fill="#0089f2"/><rect x="840" y="-80" width="40" height="40" fill="#0088f4"/><rect x="880" y="-80" width="40" height="40" fill="#0088f6"/><rect x="920" y="-80" width="40" height="40" fill="#0088f8"/><rect x="960" y="-80" width="40" height="40" fill="#0088fa"/><rect x="1000" y="-80" width="40" height="40" fill="#0088fb"/><rect x="1040" y="-80" width="40" height="40" fill="#0087fc"/><rect x="1080" y="-80" width="40" height="40" fill="#0087fd"/><rect x="1120" y="-80" width="40" height="40" fill="#0086fe"/><rect x="1160" y="-80" width="40" height="40" fill="#0086fe"/><rect x="-40" y="-40" width="40" height="40" fill="#009de8"/><rect x="0" y="-40" width="40" height="40" fill="#009de8"/><rect x="40" y="-40" width="40" height="40" fill="#009ce8"/><rect x="80" y="-40" width="40" height="40" fill="#009ce8"/><rect x="120" y="-40" width="40" height="40" fill="#009be7"/><rect x="160" y="-40" width="40" height="40" fill="#009ae7"/><rect x="200" y="-40" width="40" height="40" fill="#0099e7"/><rect x="240" y="-40" width="40" height="40" fill="#0099e7"/><rect x="280" y="-40" width="40" height="40" fill="#0098e6"/><rect x="320" y="-40" width="40" height="40" fill="#0097e6"/><rect x="360" y="-40" width="40" height="40" fill="#0095e6"/><rect x="400" y="-40" width="40" height="40" fill="#0094e6"/><rect x="440" y="-40" width="40" height="40" fill="#0093e6"/><rect x="480" y="-40" width="40" height="40" fill="#0092e6"/><rect x="520" y="-40" width="40" height="40" fill="#0090e7"/><rect x="560" y="-40" width="40" height="40" fill="#008fe7"/><rect x="600" y="-40" width="40" height="40" fill="#008ee8"/><rect x="640" y="-40" width="40" height="40" fill="#008cea"/><rect x="680" y="-40" width="40" height="40" fill="#008bec"/><rect x="720" y="-40" width="40" height="40" fill="#008aee"/><rect x="760" y="-40" width="40" height="40" fill="#008af0"/><rect x="800" y="-40" width="40" height="40" fill="#0089f3"/><rect x="840" y="-40" width="40" height="40" fill="#0089f5"/><rect x="880" y="-40" width="40" height="40" fill="#0089f8"/><rect x="920" y="-40" width="40" height="40" fill="#0089f9"/><rect x="960" y="-40" width="40" height="40" fill="#0089fb"/><rect x="1000" y="-40" width="40" height="40" fill="#0089fc"/><rect x="1040" y="-40" width="40" height="40" fill="#0089fd"/><rect x="1080" y="-40" width="40" height="40" fill="#0088fe"/><rect x="1120" y="-40" width="40" height="40" fill="#0088fe"/><rect x="1160" y="-40" width="40" height="40" fill="#0087ff"/><rect x="-40" y="0" width="40" height="40" fill="#009fe9"/><rect x="0" y="0" width="40" height="40" fill="#009ee9"/><rect x="40" y="0" width="40" height="40" fill="#009ee9"/><rect x="80" y="0" width="40" height="40" fill="#009de8"/><rect x="120" y="0" width="40" height="40" fill="#009ce8"/><rect x="160" y="0" width="40" height="40" fill="#009ce8"/><rect x="200" y="0" width="40" height="40" fill="#009be8"/><rect x="240" y="0" width="40" height="40" fill="#009ae7"/><rect x="280" y="0" width="40" height="40" fill="#0099e7"/><rect x="320" y="0" width="40" height="40" fill="#0098e7"/><rect x="360" y="0" width="40" height="40" fill="#0097e7"/><rect x="400" y="0" width="40" height="40" fill="#0096e6"/><rect x="440" y="0" width="40" height="40" fill="#0094e6"/><rect x="480" y="0" width="40" height="40" fill="#0093e7"/><rect x="520" y="0" width="40" height="40" fill="#0092e7"/><rect x="560" y="0" width="40" height="40" fill="#0090e7"/><rect x="600" y="0" width="40" height="40" fill="#008fe8"/><rect x="640" y="0" width="40" height="40" fill="#008dea"/><rect x="680" y="0" width="40" height="40" fill="#008cec"/><rect x="720" y="0" width="40" height="40" fill="#008bee"/><rect x="760" y="0" width="40" height="40" fill="#008bf1"/><rect x="800" y="0" width="40" height="40" fill="#008af4"/><rect x="840" y="0" width="40" height="40" fill="#008af7"/><rect x="880" y="0" width="40" height="40" fill="#008af9"/><rect x="920" y="0" width="40" height="40" fill="#008afb"/><rect x="960" y="0" width="40" height="40" fill="#008afc"/><rect x="1000" y="0" width="40" height="40" fill="#008afd"/><rect x="1040" y="0" width="40" height="40" fill="#008afe"/><rect x="1080" y="0" width="40" height="40" fill="#0089fe"/><rect x="1120" y="0" width="40" height="40" fill="#0089ff"/><rect x="1160" y="0" width="40" height="40" fill="#0088ff"/><rect x="-40" y="40" width="40" height="40" fill="#00a0ea"/><rect x="0" y="40" width="40" height="40" fill="#00a0ea"/><rect x="40" y="40" width="40" height="40" fill="#009fea"/><rect x="80" y="40" width="40" height="40" fill="#009fe9"/><rect x="120" y="40" width="40" height="40" fill="#009ee9"/><rect x="160" y="40" width="40" height="40" fill="#009de9"/><rect x="200" y="40" width="40" height="40" fill="#009ce9"/><rect x="240" y="40" width="40" height="40" fill="#009ce8"/><rect x="280" y="40" width="40" height="40" fill="#009be8"/><rect x="320" y="40" width="40" height="40" fill="#009ae8"/><rect x="360" y="40" width="40" height="40" fill="#0098e7"/><rect x="400" y="40" width="40" height="40" fill="#0097e7"/><rect x="440" y="40" width="40" height="40" fill="#0096e7"/><rect x="480" y="40" width="40" height="40" fill="#0094e7"/><rect x="520" y="40" width="40" height="40" fill="#0093e7"/><rect x="560" y="40" width="40" height="40" fill="#0091e8"/><rect x="600" y="40" width="40" height="40" fill="#0090e9"/><rect x="640" y="40" width="40" height="40" fill="#008eea"/><rect x="680" y="40" width="40" height="40" fill="#008dec"/><rect x="720" y="40" width="40" height="40" fill="#008cef"/><rect x="760" y="40" width="40" height="40" fill="#008bf2"/><rect x="800" y="40" width="40" height="40" fill="#008bf5"/><rect x="840" y="40" width="40" height="40" fill="#008bf8"/><rect x="880" y="40" width="40" height="40" fill="#008bfa"/><rect x="920" y="40" width="40" height="40" fill="#008bfc"/><rect x="960" y="40" width="40" height="40" fill="#008cfd"/><rect x="1000" y="40" width="40" height="40" fill="#008cfe"/><rect x="1040" y="40" width="40" height="40" fill="#008bfe"/><rect x="1080" y="40" width="40" height="40" fill="#008bff"/><rect x="1120" y="40" width="40" height="40" fill="#008aff"/><rect x="1160" y="40" width="40" height="40" fill="#0089ff"/><rect x="-40" y="80" width="40" height="40" fill="#00a2eb"/><rect x="0" y="80" width="40" height="40" fill="#00a1eb"/><rect x="40" y="80" width="40" height="40" fill="#00a1eb"/><rect x="80" y="80" width="40" height="40" fill="#00a0ea"/><rect x="120" y="80" width="40" height="40" fill="#00a0ea"/><rect x="160" y="80" width="40" height="40" fill="#009fea"/><rect x="200" y="80" width="40" height="40" fill="#009ee9"/><rect x="240" y="80" width="40" height="40" fill="#009de9"/><rect x="280" y="80" width="40" height="40" fill="#009ce9"/><rect x="320" y="80" width="40" height="40" fill="#009be8"/><rect x="360" y="80" width="40" height="40" fill="#009ae8"/><rect x="400" y="80" width="40" height="40" fill="#0099e8"/><rect x="440" y="80" width="40" height="40" fill="#0097e8"/><rect x="480" y="80" width="40" height="40" fill="#0096e8"/><rect x="520" y="80" width="40" height="40" fill="#0095e8"/><rect x="560" y="80" width="40" height="40" fill="#0093e8"/><rect x="600" y="80" width="40" height="40" fill="#0091e9"/><rect x="640" y="80" width="40" height="40" fill="#0090ea"/><rect x="680" y="80" width="40" height="40" fill="#008eec"/><rect x="720" y="80" width="40" height="40" fill="#008def"/><rect x="760" y="80" width="40" height="40" fill="#008cf3"/><rect x="800" y="80" width="40" height="40" fill="#008cf7"/><rect x="840" y="80" width="40" height="40" fill="#008cfa"/><rect x="880" y="80" width="40" height="40" fill="#008cfc"/><rect x="920" y="80" width="40" height="40" fill="#008dfd"/><rect x="960" y="80" width="40" height="40" fill="#008dfe"/><rect x="1000" y="80" width="40" height="40" fill="#008dfe"/><rect x="1040" y="80" width="40" height="40" fill="#008dff"/><rect x="1080" y="80" width="40" height="40" fill="#008cff"/><rect x="1120" y="80" width="40" height="40" fill="#008bff"/><rect x="1160" y="80" width="40" height="40" fill="#008aff"/><rect x="-40" y="120" width="40" height="40" fill="#00a3ec"/><rect x="0" y="120" width="40" height="40" fill="#00a3ec"/><rect x="40" y="120" width="40" height="40" fill="#00a2ec"/><rect x="80" y="120" width="40" height="40" fill="#00a2ec"/><rect x="120" y="120" width="40" height="40" fill="#00a1eb"/><rect x="160" y="120" width="40" height="40" fill="#00a0eb"/><rect x="200" y="120" width="40" height="40" fill="#009fea"/><rect x="240" y="120" width="40" height="40" fill="#009fea"/><rect x="280" y="120" width="40" height="40" fill="#009eea"/><rect x="320" y="120" width="40" height="40" fill="#009de9"/><rect x="360" y="120" width="40" height="40" fill="#009be9"/><rect x="400" y="120" width="40" height="40" fill="#009ae9"/><rect x="440" y="120" width="40" height="40" fill="#0099e9"/><rect x="480" y="120" width="40" height="40" fill="#0098e9"/><rect x="520" y="120" width="40" height="40" fill="#0096e9"/><rect x="560" y="120" width="40" height="40" fill="#0095e9"/><rect x="600" y="120" width="40" height="40" fill="#0093ea"/><rect x="640" y="120" width="40" height="40" fill="#0091eb"/><rect x="680" y="120" width="40" height="40" fill="#0090ed"/><rect x="720" y="120" width="40" height="40" fill="#008ef0"/><rect x="760" y="120" width="40" height="40" fill="#008df4"/><rect x="800" y="120" width="40" height="40" fill="#008df9"/><rect x="840" y="120" width="40" height="40" fill="#008dfc"/><rect x="880" y="120" width="40" height="40" fill="#008dfe"/><rect x="920" y="120" width="40" height="40" fill="#008efe"/><rect x="960" y="120" width="40" height="40" fill="#008fff"/><rect x="1000" y="120" width="40" height="40" fill="#008fff"/><rect x="1040" y="120" width="40" height="40" fill="#008eff"/><rect x="1080" y="120" width="40" height="40" fill="#008dff"/><rect x="1120" y="120" width="40" height="40" fill="#008cff"/><rect x="1160" y="120" width="40" height="40" fill="#008bff"/><rect x="-40" y="160" width="40" height="40" fill="#00a5ed"/><rect x="0" y="160" width="40" height="40" fill="#00a4ed"/><rect x="40" y="160" width="40" height="40" fill="#00a4ed"/><rect x="80" y="160" width="40" height="40" fill="#00a3ed"/><rect x="120" y="160" width="40" height="40" fill="#00a2ec"/><rect x="160" y="160" width="40" height="40" fill="#00a2ec"/><rect x="200" y="160" width="40" height="40" fill="#00a1eb"/><rect x="240" y="160" width="40" height="40" fill="#00a0eb"/><rect x="280" y="160" width="40" height="40" fill="#009feb"/><rect x="320" y="160" width="40" height="40" fill="#009eea"/><rect x="360" y="160" width="40" height="40" fill="#009dea"/><rect x="400" y="160" width="40" height="40" fill="#009cea"/><rect x="440" y="160" width="40" height="40" fill="#009bea"/><rect x="480" y="160" width="40" height="40" fill="#0099ea"/><rect x="520" y="160" width="40" height="40" fill="#0098ea"/><rect x="560" y="160" width="40" height="40" fill="#0096ea"/><rect x="600" y="160" width="40" height="40" fill="#0095eb"/><rect x="640" y="160" width="40" height="40" fill="#0093ec"/><rect x="680" y="160" width="40" height="40" fill="#0091ee"/><rect x="720" y="160" width="40" height="40" fill="#0090f1"/><rect x="760" y="160" width="40" height="40" fill="#008ef6"/><rect x="800" y="160" width="40" height="40" fill="#008efb"/><rect x="840" y="160" width="40" height="40" fill="#008efe"/><rect x="880" y="160" width="40" height="40" fill="#008fff"/><rect x="920" y="160" width="40" height="40" fill="#0090ff"/><rect x="960" y="160" width="40" height="40" fill="#0091ff"/><rect x="1000" y="160" width="40" height="40" fill="#0091ff"/><rect x="1040" y="160" width="40" height="40" fill="#0090ff"/><rect x="1080" y="160" width="40" height="40" fill="#008eff"/><rect x="1120" y="160" width="40" height="40" fill="#008dff"/><rect x="1160" y="160" width="40" height="40" fill="#008cff"/><rect x="-40" y="200" width="40" height="40" fill="#00a6ee"/><rect x="0" y="200" width="40" height="40" fill="#00a6ee"/><rect x="40" y="200" width="40" height="40" fill="#00a5ee"/><rect x="80" y="200" width="40" height="40" fill="#00a4ee"/><rect x="120" y="200" width="40" height="40" fill="#00a4ed"/><rect x="160" y="200" width="40" height="40" fill="#00a3ed"/><rect x="200" y="200" width="40" height="40" fill="#00a2ec"/><rect x="240" y="200" width="40" height="40" fill="#00a1ec"/><rect x="280" y="200" width="40" height="40" fill="#00a0ec"/><rect x="320" y="200" width="40" height="40" fill="#009feb"/><rect x="360" y="200" width="40" height="40" fill="#009eeb"/><rect x="400" y="200" width="40" height="40" fill="#009deb"/><rect x="440" y="200" width="40" height="40" fill="#009ceb"/><rect x="480" y="200" width="40" height="40" fill="#009beb"/><rect x="520" y="200" width="40" height="40" fill="#009aec"/><rect x="560" y="200" width="40" height="40" fill="#0098ec"/><rect x="600" y="200" width="40" height="40" fill="#0097ed"/><rect x="640" y="200" width="40" height="40" fill="#0095ee"/><rect x="680" y="200" width="40" height="40" fill="#0093f0"/><rect x="720" y="200" width="40" height="40" fill="#0092f3"/><rect x="760" y="200" width="40" height="40" fill="#0090f8"/><rect x="800" y="200" width="40" height="40" fill="#008ffd"/><rect x="840" y="200" width="40" height="40" fill="#008fff"/><rect x="880" y="200" width="40" height="40" fill="#0090ff"/><rect x="920" y="200" width="40" height="40" fill="#0091ff"/><rect x="960" y="200" width="40" height="40" fill="#0092ff"/><rect x="1000" y="200" width="40" height="40" fill="#0092fe"/><rect x="1040" y="200" width="40" height="40" fill="#0091fe"/><rect x="1080" y="200" width="40" height="40" fill="#008fff"/><rect x="1120" y="200" width="40" height="40" fill="#008dff"/><rect x="1160" y="200" width="40" height="40" fill="#008cff"/><rect x="-40" y="240" width="40" height="40" fill="#00a7ef"/><rect x="0" y="240" width="40" height="40" fill="#00a7ef"/><rect x="40" y="240" width="40" height="40" fill="#00a6ef"/><rect x="80" y="240" width="40" height="40" fill="#00a5ee"/><rect x="120" y="240" width="40" height="40" fill="#00a5ee"/><rect x="160" y="240" width="40" height="40" fill="#00a4ee"/><rect x="200" y="240" width="40" height="40" fill="#00a3ed"/><rect x="240" y="240" width="40" height="40" fill="#00a2ed"/><rect x="280" y="240" width="40" height="40" fill="#00a1ed"/><rect x="320" y="240" width="40" height="40" fill="#00a0ed"/><rect x="360" y="240" width="40" height="40" fill="#00a0ec"/><rect x="400" y="240" width="40" height="40" fill="#009fec"/><rect x="440" y="240" width="40" height="40" fill="#009eed"/><rect x="480" y="240" width="40" height="40" fill="#009ded"/><rect x="520" y="240" width="40" height="40" fill="#009ced"/><rect x="560" y="240" width="40" height="40" fill="#009aee"/><rect x="600" y="240" width="40" height="40" fill="#0099ef"/><rect x="640" y="240" width="40" height="40" fill="#0098f0"/><rect x="680" y="240" width="40" height="40" fill="#0096f2"/><rect x="720" y="240" width="40" height="40" fill="#0094f5"/><rect x="760" y="240" width="40" height="40" fill="#0092f9"/><rect x="800" y="240" width="40" height="40" fill="#0091fc"/><rect x="840" y="240" width="40" height="40" fill="#0091fe"/><rect x="880" y="240" width="40" height="40" fill="#0091ff"/><rect x="920" y="240" width="40" height="40" fill="#0092fe"/><rect x="960" y="240" width="40" height="40" fill="#0093fe"/><rect x="1000" y="240" width="40" height="40" fill="#0093fe"/><rect x="1040" y="240" width="40" height="40" fill="#0091fe"/><rect x="1080" y="240" width="40" height="40" fill="#008ffe"/><rect x="1120" y="240" width="40" height="40" fill="#008eff"/><rect x="1160" y="240" width="40" height="40" fill="#008cff"/><rect x="-40" y="280" width="40" height="40" fill="#00a8ef"/><rect x="0" y="280" width="40" height="40" fill="#00a7ef"/><rect x="40" y="280" width="40" height="40" fill="#00a7ef"/><rect x="80" y="280" width="40" height="40" fill="#00a6ef"/><rect x="120" y="280" width="40" height="40" fill="#00a5ef"/><rect x="160" y="280" width="40" height="40" fill="#00a4ee"/><rect x="200" y="280" width="40" height="40" fill="#00a4ee"/><rect x="240" y="280" width="40" height="40" fill="#00a3ee"/><rect x="280" y="280" width="40" height="40" fill="#00a2ee"/><rect x="320" y="280" width="40" height="40" fill="#00a1ee"/><rect x="360" y="280" width="40" height="40" fill="#00a1ee"/><rect x="400" y="280" width="40" height="40" fill="#00a0ee"/><rect x="440" y="280" width="40" height="40" fill="#009fee"/><rect x="480" y="280" width="40" height="40" fill="#009eef"/><rect x="520" y="280" width="40" height="40" fill="#009def"/><rect x="560" y="280" width="40" height="40" fill="#009cf0"/><rect x="600" y="280" width="40" height="40" fill="#009bf1"/><rect x="640" y="280" width="40" height="40" fill="#009af3"/><rect x="680" y="280" width="40" height="40" fill="#0098f4"/><rect x="720" y="280" width="40" height="40" fill="#0096f6"/><rect x="760" y="280" width="40" height="40" fill="#0094f9"/><rect x="800" y="280" width="40" height="40" fill="#0092fb"/><rect x="840" y="280" width="40" height="40" fill="#0092fd"/><rect x="880" y="280" width="40" height="40" fill="#0092fd"/><rect x="920" y="280" width="40" height="40" fill="#0093fd"/><rect x="960" y="280" width="40" height="40" fill="#0093fd"/><rect x="1000" y="280" width="40" height="40" fill="#0093fd"/><rect x="1040" y="280" width="40" height="40" fill="#0091fd"/><rect x="1080" y="280" width="40" height="40" fill="#008ffe"/><rect x="1120" y="280" width="40" height="40" fill="#008efe"/><rect x="1160" y="280" width="40" height="40" fill="#008cfe"/><rect x="-40" y="320" width="40" height="40" fill="#00a7f0"/><rect x="0" y="320" width="40" height="40" fill="#00a7f0"/><rect x="40" y="320" width="40" height="40" fill="#00a7f0"/><rect x="80" y="320" width="40" height="40" fill="#00a6ef"/><rect x="120" y="320" width="40" height="40" fill="#00a5ef"/><rect x="160" y="320" width="40" height="40" fill="#00a5ef"/><rect x="200" y="320" width="40" height="40" fill="#00a4ef"/><rect x="240" y="320" width="40" height="40" fill="#00a3ef"/><rect x="280" y="320" width="40" height="40" fill="#00a3ee"/><rect x="320" y="320" width="40" height="40" fill="#00a2ef"/><rect x="360" y="320" width="40" height="40" fill="#00a2ef"/><rect x="400" y="320" width="40" height="40" fill="#00a1ef"/><rect x="440" y="320" width="40" height="40" fill="#00a0ef"/><rect x="480" y="320" width="40" height="40" fill="#00a0f0"/><rect x="520" y="320" width="40" height="40" fill="#009ff1"/><rect x="560" y="320" width="40" height="40" fill="#009ef2"/><rect x="600" y="320" width="40" height="40" fill="#009df3"/><rect x="640" y="320" width="40" height="40" fill="#009cf4"/><rect x="680" y="320" width="40" height="40" fill="#009af6"/><rect x="720" y="320" width="40" height="40" fill="#0097f7"/><rect x="760" y="320" width="40" height="40" fill="#0095f9"/><rect x="800" y="320" width="40" height="40" fill="#0093fa"/><rect x="840" y="320" width="40" height="40" fill="#0092fb"/><rect x="880" y="320" width="40" height="40" fill="#0093fb"/><rect x="920" y="320" width="40" height="40" fill="#0093fc"/><rect x="960" y="320" width="40" height="40" fill="#0093fc"/><rect x="1000" y="320" width="40" height="40" fill="#0092fc"/><rect x="1040" y="320" width="40" height="40" fill="#0091fc"/><rect x="1080" y="320" width="40" height="40" fill="#008ffd"/><rect x="1120" y="320" width="40" height="40" fill="#008efd"/><rect x="1160" y="320" width="40" height="40" fill="#008dfe"/><rect x="-40" y="360" width="40" height="40" fill="#00a7ef"/><rect x="0" y="360" width="40" height="40" fill="#00a6f0"/><rect x="40" y="360" width="40" height="40" fill="#00a6f0"/><rect x="80" y="360" width="40" height="40" fill="#00a6ef"/><rect x="120" y="360" width="40" height="40" fill="#00a5ef"/><rect x="160" y="360" width="40" height="40" fill="#00a5ef"/><rect x="200" y="360" width="40" height="40" fill="#00a4ef"/><rect x="240" y="360" width="40" height="40" fill="#00a4ef"/><rect x="280" y="360" width="40" height="40" fill="#00a3ef"/><rect x="320" y="360" width="40" height="40" fill="#00a3ef"/><rect x="360" y="360" width="40" height="40" fill="#00a2f0"/><rect x="400" y="360" width="40" height="40" fill="#00a2f0"/><rect x="440" y="360" width="40" height="40" fill="#00a1f0"/><rect x="480" y="360" width="40" height="40" fill="#00a1f1"/><rect x="520" y="360" width="40" height="40" fill="#00a0f2"/><rect x="560" y="360" width="40" height="40" fill="#009ff3"/><rect x="600" y="360" width="40" height="40" fill="#009ef5"/><rect x="640" y="360" width="40" height="40" fill="#009df6"/><rect x="680" y="360" width="40" height="40" fill="#009bf7"/><rect x="720" y="360" width="40" height="40" fill="#0098f8"/><rect x="760" y="360" width="40" height="40" fill="#0095f8"/><rect x="800" y="360" width="40" height="40" fill="#0093f9"/><rect x="840" y="360" width="40" height="40" fill="#0093f9"/><rect x="880" y="360" width="40" height="40" fill="#0093fa"/><rect x="920" y="360" width="40" height="40" fill="#0093fa"/><rect x="960" y="360" width="40" height="40" fill="#0093fa"/><rect x="1000" y="360" width="40" height="40" fill="#0092fb"/><rect x="1040" y="360" width="40" height="40" fill="#0091fb"/><rect x="1080" y="360" width="40" height="40" fill="#0090fc"/><rect x="1120" y="360" width="40" height="40" fill="#008efc"/><rect x="1160" y="360" width="40" height="40" fill="#008dfd"/><rect x="-40" y="400" width="40" height="40" fill="#00a6ef"/><rect x="0" y="400" width="40" height="40" fill="#00a5ef"/><rect x="40" y="400" width="40" height="40" fill="#00a5ef"/><rect x="80" y="400" width="40" height="40" fill="#00a5ef"/><rect x="120" y="400" width="40" height="40" fill="#00a5ef"/><rect x="160" y="400" width="40" height="40" fill="#00a4ef"/><rect x="200" y="400" width="40" height="40" fill="#00a4ef"/><rect x="240" y="400" width="40" height="40" fill="#00a4f0"/><rect x="280" y="400" width="40" height="40" fill="#00a3f0"/><rect x="320" y="400" width="40" height="40" fill="#00a3f0"/><rect x="360" y="400" width="40" height="40" fill="#00a3f0"/><rect x="400" y="400" width="40" height="40" fill="#00a2f1"/><rect x="440" y="400" width="40" height="40" fill="#00a2f1"/><rect x="480" y="400" width="40" height="40" fill="#00a1f2"/><rect x="520" y="400" width="40" height="40" fill="#00a1f3"/><rect x="560" y="400" width="40" height="40" fill="#00a0f4"/><rect x="600" y="400" width="40" height="40" fill="#009ff5"/><rect x="640" y="400" width="40" height="40" fill="#009ef7"/><rect x="680" y="400" width="40" height="40" fill="#009cf7"/><rect x="720" y="400" width="40" height="40" fill="#0098f8"/><rect x="760" y="400" width="40" height="40" fill="#0095f8"/><rect x="800" y="400" width="40" height="40" fill="#0093f7"/><rect x="840" y="400" width="40" height="40" fill="#0093f8"/><rect x="880" y="400" width="40" height="40" fill="#0093f8"/><rect x="920" y="400" width="40" height="40" fill="#0093f9"/><rect x="960" y="400" width="40" height="40" fill="#0093f9"/><rect x="1000" y="400" width="40" height="40" fill="#0092fa"/><rect x="1040" y="400" width="40" height="40" fill="#0091fa"/><rect x="1080" y="400" width="40" height="40" fill="#0090fb"/><rect x="1120" y="400" width="40" height="40" fill="#008ffc"/><rect x="1160" y="400" width="40" height="40" fill="#008efc"/><rect x="-40" y="440" width="40" height="40" fill="#00a4ef"/><rect x="0" y="440" width="40" height="40" fill="#00a4ef"/><rect x="40" y="440" width="40" height="40" fill="#00a4ef"/><rect x="80" y="440" width="40" height="40" fill="#00a4ef"/><rect x="120" y="440" width="40" height="40" fill="#00a4ef"/><rect x="160" y="440" width="40" height="40" fill="#00a4ef"/><rect x="200" y="440" width="40" height="40" fill="#00a4f0"/><rect x="240" y="440" width="40" height="40" fill="#00a4f0"/><rect x="280" y="440" width="40" height="40" fill="#00a3f0"/><rect x="320" y="440" width="40" height="40" fill="#00a3f0"/><rect x="360" y="440" width="40" height="40" fill="#00a3f1"/><rect x="400" y="440" width="40" height="40" fill="#00a3f1"/><rect x="440" y="440" width="40" height="40" fill="#00a2f2"/><rect x="480" y="440" width="40" height="40" fill="#00a2f3"/><rect x="520" y="440" width="40" height="40" fill="#00a1f4"/><rect x="560" y="440" width="40" height="40" fill="#00a1f5"/><rect x="600" y="440" width="40" height="40" fill="#009ff6"/><rect x="640" y="440" width="40" height="40" fill="#009ef6"/><rect x="680" y="440" width="40" height="40" fill="#009cf7"/><rect x="720" y="440" width="40" height="40" fill="#0099f7"/><rect x="760" y="440" width="40" height="40" fill="#0096f6"/><rect x="800" y="440" width="40" height="40" fill="#0095f6"/><rect x="840" y="440" width="40" height="40" fill="#0095f6"/><rect x="880" y="440" width="40" height="40" fill="#0094f6"/><rect x="920" y="440" width="40" height="40" fill="#0094f7"/><rect x="960" y="440" width="40" height="40" fill="#0093f8"/><rect x="1000" y="440" width="40" height="40" fill="#0093f9"/><rect x="1040" y="440" width="40" height="40" fill="#0092f9"/><rect x="1080" y="440" width="40" height="40" fill="#0090fa"/><rect x="1120" y="440" width="40" height="40" fill="#008ffb"/><rect x="1160" y="440" width="40" height="40" fill="#008efb"/><rect x="-40" y="480" width="40" height="40" fill="#00a3ee"/><rect x="0" y="480" width="40" height="40" fill="#00a3ee"/><rect x="40" y="480" width="40" height="40" fill="#00a3ef"/><rect x="80" y="480" width="40" height="40" fill="#00a3ef"/><rect x="120" y="480" width="40" height="40" fill="#00a3ef"/><rect x="160" y="480" width="40" height="40" fill="#00a3ef"/><rect x="200" y="480" width="40" height="40" fill="#00a3f0"/><rect x="240" y="480" width="40" height="40" fill="#00a3f0"/><rect x="280" y="480" width="40" height="40" fill="#00a3f0"/><rect x="320" y="480" width="40" height="40" fill="#00a3f1"/><rect x="360" y="480" width="40" height="40" fill="#00a3f1"/><rect x="400" y="480" width="40" height="40" fill="#00a3f2"/><rect x="440" y="480" width="40" height="40" fill="#00a3f2"/><rect x="480" y="480" width="40" height="40" fill="#00a2f3"/><rect x="520" y="480" width="40" height="40" fill="#00a2f4"/><rect x="560" y="480" width="40" height="40" fill="#00a1f5"/><rect x="600" y="480" width="40" height="40" fill="#00a0f5"/><rect x="640" y="480" width="40" height="40" fill="#009ef6"/><rect x="680" y="480" width="40" height="40" fill="#009cf6"/><rect x="720" y="480" width="40" height="40" fill="#009af6"/><rect x="760" y="480" width="40" height="40" fill="#0098f5"/><rect x="800" y="480" width="40" height="40" fill="#0097f5"/><rect x="840" y="480" width="40" height="40" fill="#0096f5"/><rect x="880" y="480" width="40" height="40" fill="#0096f5"/><rect x="920" y="480" width="40" height="40" fill="#0095f6"/><rect x="960" y="480" width="40" height="40" fill="#0094f7"/><rect x="1000" y="480" width="40" height="40" fill="#0093f8"/><rect x="1040" y="480" width="40" height="40" fill="#0092f8"/><rect x="1080" y="480" width="40" height="40" fill="#0091f9"/><rect x="1120" y="480" width="40" height="40" fill="#0090fa"/><rect x="1160" y="480" width="40" height="40" fill="#008ffb"/><rect x="-40" y="520" width="40" height="40" fill="#00a2ee"/><rect x="0" y="520" width="40" height="40" fill="#00a2ee"/><rect x="40" y="520" width="40" height="40" fill="#00a2ee"/><rect x="80" y="520" width="40" height="40" fill="#00a2ef"/><rect x="120" y="520" width="40" height="40" fill="#00a3ef"/><rect x="160" y="520" width="40" height="40" fill="#00a3ef"/><rect x="200" y="520" width="40" height="40" fill="#00a3f0"/><rect x="240" y="520" width="40" height="40" fill="#00a3f0"/><rect x="280" y="520" width="40" height="40" fill="#00a3f0"/><rect x="320" y="520" width="40" height="40" fill="#00a3f1"/><rect x="360" y="520" width="40" height="40" fill="#00a3f1"/><rect x="400" y="520" width="40" height="40" fill="#00a3f2"/><rect x="440" y="520" width="40" height="40" fill="#00a3f2"/><rect x="480" y="520" width="40" height="40" fill="#00a2f3"/><rect x="520" y="520" width="40" height="40" fill="#00a2f4"/><rect x="560" y="520" width="40" height="40" fill="#00a1f4"/><rect x="600" y="520" width="40" height="40" fill="#00a0f5"/><rect x="640" y="520" width="40" height="40" fill="#009ef5"/><rect x="680" y="520" width="40" height="40" fill="#009df5"/><rect x="720" y="520" width="40" height="40" fill="#009bf5"/><rect x="760" y="520" width="40" height="40" fill="#0099f5"/><rect x="800" y="520" width="40" height="40" fill="#0098f4"/><rect x="840" y="520" width="40" height="40" fill="#0097f4"/><rect x="880" y="520" width="40" height="40" fill="#0096f5"/><rect x="920" y="520" width="40" height="40" fill="#0096f5"/><rect x="960" y="520" width="40" height="40" fill="#0095f6"/><rect x="1000" y="520" width="40" height="40" fill="#0094f7"/><rect x="1040" y="520" width="40" height="40" fill="#0093f7"/><rect x="1080" y="520" width="40" height="40" fill="#0092f8"/><rect x="1120" y="520" width="40" height="40" fill="#0091f9"/><rect x="1160" y="520" width="40" height="40" fill="#008ffa"/><rect x="-40" y="560" width="40" height="40" fill="#00a1ed"/><rect x="0" y="560" width="40" height="40" fill="#00a1ee"/><rect x="40" y="560" width="40" height="40" fill="#00a1ee"/><rect x="80" y="560" width="40" height="40" fill="#00a2ee"/><rect x="120" y="560" width="40" height="40" fill="#00a2ef"/><rect x="160" y="560" width="40" height="40" fill="#00a2ef"/><rect x="200" y="560" width="40" height="40" fill="#00a3f0"/><rect x="240" y="560" width="40" height="40" fill="#00a3f0"/><rect x="280" y="560" width="40" height="40" fill="#00a3f0"/><rect x="320" y="560" width="40" height="40" fill="#00a3f1"/><rect x="360" y="560" width="40" height="40" fill="#00a3f1"/><rect x="400" y="560" width="40" height="40" fill="#00a3f2"/><rect x="440" y="560" width="40" height="40" fill="#00a2f2"/><rect x="480" y="560" width="40" height="40" fill="#00a2f3"/><rect x="520" y="560" width="40" height="40" fill="#00a1f4"/><rect x="560" y="560" width="40" height="40" fill="#00a1f4"/><rect x="600" y="560" width="40" height="40" fill="#00a0f4"/><rect x="640" y="560" width="40" height="40" fill="#009ff5"/><rect x="680" y="560" width="40" height="40" fill="#009df5"/><rect x="720" y="560" width="40" height="40" fill="#009cf4"/><rect x="760" y="560" width="40" height="40" fill="#009af4"/><rect x="800" y="560" width="40" height="40" fill="#0099f4"/><rect x="840" y="560" width="40" height="40" fill="#0098f4"/><rect x="880" y="560" width="40" height="40" fill="#0097f4"/><rect x="920" y="560" width="40" height="40" fill="#0096f5"/><rect x="960" y="560" width="40" height="40" fill="#0095f5"/><rect x="1000" y="560" width="40" height="40" fill="#0094f6"/><rect x="1040" y="560" width="40" height="40" fill="#0093f7"/><rect x="1080" y="560" width="40" height="40" fill="#0092f8"/><rect x="1120" y="560" width="40" height="40" fill="#0091f8"/><rect x="1160" y="560" width="40" height="40" fill="#0090f9"/><rect x="-40" y="600" width="40" height="40" fill="#00a1ed"/><rect x="0" y="600" width="40" height="40" fill="#00a1ed"/><rect x="40" y="600" width="40" height="40" fill="#00a1ee"/><rect x="80" y="600" width="40" height="40" fill="#00a1ee"/><rect x="120" y="600" width="40" height="40" fill="#00a2ef"/><rect x="160" y="600" width="40" height="40" fill="#00a2ef"/><rect x="200" y="600" width="40" height="40" fill="#00a2ef"/><rect x="240" y="600" width="40" height="40" fill="#00a2f0"/><rect x="280" y="600" width="40" height="40" fill="#00a3f0"/><rect x="320" y="600" width="40" height="40" fill="#00a3f1"/><rect x="360" y="600" width="40" height="40" fill="#00a3f1"/><rect x="400" y="600" width="40" height="40" fill="#00a2f2"/><rect x="440" y="600" width="40" height="40" fill="#00a2f2"/><rect x="480" y="600" width="40" height="40" fill="#00a2f3"/><rect x="520" y="600" width="40" height="40" fill="#00a1f3"/><rect x="560" y="600" width="40" height="40" fill="#00a1f4"/><rect x="600" y="600" width="40" height="40" fill="#00a0f4"/><rect x="640" y="600" width="40" height="40" fill="#009ff4"/><rect x="680" y="600" width="40" height="40" fill="#009df4"/><rect x="720" y="600" width="40" height="40" fill="#009cf4"/><rect x="760" y="600" width="40" height="40" fill="#009bf4"/><rect x="800" y="600" width="40" height="40" fill="#009af4"/><rect x="840" y="600" width="40" height="40" fill="#0099f4"/><rect x="880" y="600" width="40" height="40" fill="#0098f4"/><rect x="920" y="600" width="40" height="40" fill="#0097f4"/><rect x="960" y="600" width="40" height="40" fill="#0096f5"/><rect x="1000" y="600" width="40" height="40" fill="#0095f6"/><rect x="1040" y="600" width="40" height="40" fill="#0094f6"/><rect x="1080" y="600" width="40" height="40" fill="#0093f7"/><rect x="1120" y="600" width="40" height="40" fill="#0092f8"/><rect x="1160" y="600" width="40" height="40" fill="#0091f9"/></g></g>
<line x1="674" y1="134.5" x2="1096" y2="258.3" stroke="#30b8ff" stroke-width="1.6" opacity="0.5" filter="url(#b1)"/>
<line x1="674" y1="497" x2="849.9" y2="475.8" stroke="#30b8ff" stroke-width="1.6" opacity="0.45" filter="url(#b1)"/>
<line x1="1096" y1="510.4" x2="674" y2="625.6" stroke="#20a0ff" stroke-width="1.5" opacity="0.2" filter="url(#b1)"/>
<!-- logo gaps -->
<rect x="954.5" y="279.5" width="6" height="210.5" fill="#0080ec"/>
<rect x="849.5" y="381.5" width="246.5" height="6" fill="#0080ec"/>
<!-- panes -->
<polygon points="849.5,292.5 954.5,278.7 954.5,381.5 849.5,381.5" fill="url(#pane)"/>
<polygon points="960.3,276.7 1096,258.3 1096,381.5 960.3,381.5" fill="url(#pane)"/>
<polygon points="849.5,387.5 954.5,387.5 954.5,489.7 849.5,475.8" fill="url(#pane)"/>
<polygon points="960.3,387.5 1096,387.5 1096,510.4 960.3,491.7" fill="url(#pane)"/>
<polygon points="849.5,475.8 954.5,458 954.5,489.7" fill="#0a90e8" opacity="0.3"/>
<polygon points="960.3,457 1096,441.3 1096,510.4 960.3,491.7" fill="#0a90e8" opacity="0.25"/>
<line x1="849.5" y1="475.8" x2="1096" y2="441.3" stroke="#4cd8ff" stroke-width="1" opacity="0.45"/>
<g stroke="#30e0ff" stroke-width="1.6" fill="none" filter="url(#b1)" opacity="0.8">
<polyline points="849.5,381.5 849.5,292.5 954.5,278.7"/>
<polyline points="960.3,276.7 1096,258.3 1096,381.5"/>
<polyline points="849.5,387.5 849.5,475.8 954.5,489.7"/>
<polyline points="960.3,491.7 1096,510.4 1096,387.5"/>
</g>
<g stroke="#60f4ff" stroke-width="0.8" fill="none" opacity="0.7">
<polyline points="849.5,381.5 849.5,292.5 954.5,278.7"/>
<polyline points="960.3,276.7 1096,258.3 1096,381.5"/>
<polyline points="849.5,387.5 849.5,475.8 954.5,489.7"/>
<polyline points="960.3,491.7 1096,510.4 1096,387.5"/>
</g>
<g stroke="#30c8ff" stroke-width="0.8" fill="none" opacity="0.45">
<line x1="954.5" y1="278.7" x2="954.5" y2="381.5"/>
<line x1="960.3" y1="276.7" x2="960.3" y2="381.5"/>
<line x1="849.5" y1="381.5" x2="954.5" y2="381.5"/>
<line x1="960.3" y1="381.5" x2="1096" y2="381.5"/>
<line x1="954.5" y1="387.5" x2="954.5" y2="489.7"/>
<line x1="960.3" y1="387.5" x2="960.3" y2="491.7"/>
<line x1="849.5" y1="387.5" x2="954.5" y2="387.5"/>
<line x1="960.3" y1="387.5" x2="1096" y2="387.5"/>
</g>
</svg>
<div id="win"></div>

<!-- title bar -->
<svg class="a" style="left:0;top:0" width="680" height="100" viewBox="0 0 680 100">
<!-- folder icon 1 -->
<g id="fold">
<rect x="18.5" y="7.5" width="11" height="15" fill="#fde68c" stroke="#e9cd6c"/>
<rect x="28.1" y="16.5" width="2" height="6" fill="#f2cd58" stroke="#e8c660" stroke-width="0.8"/>
</g>
<line x1="39.5" y1="9" x2="39.5" y2="21" stroke="#9a9a9a"/>
<!-- doc with check -->
<path d="M51.5 8.5 H59.5 L62.5 11.5 V23.5 H51.5 Z" fill="#fafafa" stroke="#8c8c8c"/>
<path d="M59.5 8.5 V11.5 H62.5" fill="none" stroke="#8c8c8c"/>
<path d="M53.4 16.6 L56.2 19.4 L61 14.2" fill="none" stroke="#dc6e3a" stroke-width="1.3"/>
<!-- folder icon 2 -->
<rect x="73.5" y="8.5" width="11" height="15" fill="#fde68c" stroke="#e9cd6c"/>
<rect x="83.1" y="17.5" width="2" height="6" fill="#f2cd58" stroke="#e8c660" stroke-width="0.8"/>
<!-- dropdown -->
<rect x="94" y="13.6" width="7" height="1.3" fill="#111"/>
<path d="M94.6 16.3 H100.4 L97.5 19.8 Z" fill="#111"/>
<line x1="109.5" y1="9" x2="109.5" y2="21" stroke="#9a9a9a"/>
<!-- window controls -->
<line x1="554" y1="15.5" x2="564" y2="15.5" stroke="#111"/>
<rect x="599.5" y="10.5" width="9" height="9" fill="none" stroke="#111"/>
<path d="M645 10 L655 20 M655 10 L645 20" stroke="#111" stroke-width="1.1"/>
<!-- ribbon -->
<rect x="8" y="31" width="56" height="23" fill="#0066b8"/>
<line x1="8" y1="54.5" x2="674" y2="54.5" stroke="#dadbdc"/>
<path d="M636 40.3 L640 44.2 L644 40.3" fill="none" stroke="#9a9a9a" stroke-width="1.2"/>
<circle cx="662" cy="42" r="6.6" fill="#1a78d0" stroke="#0b5aa8" stroke-width="0.9"/>
<text x="662" y="46.5" text-anchor="middle" font-family="Liberation Sans" font-weight="bold" font-size="11" fill="#a8e8ff">?</text>
<!-- nav buttons -->
<path d="M22 71.8 H32.8 M26.6 67 L22 71.8 L26.6 76.6" fill="none" stroke="#6e6e6e" stroke-width="1.6"/>
<path d="M51 71.8 H61.8 M57.2 67 L61.8 71.8 L57.2 76.6" fill="none" stroke="#c6c6c6" stroke-width="1.6"/>
<path d="M77.6 70 L80.3 72.7 L83 70" fill="none" stroke="#6e6e6e" stroke-width="1.4"/>
<path d="M101 77.8 V67 M96.2 71.8 L101 67 L105.8 71.8" fill="none" stroke="#6e6e6e" stroke-width="1.6"/>
<!-- address box -->
<rect x="114.5" y="61.5" width="332" height="21" fill="#fff" stroke="#d9d9d9"/>
<line x1="429.5" y1="62" x2="429.5" y2="82" stroke="#e6e6e6"/>
<rect x="119.5" y="63.5" width="11" height="15" fill="#fde68c" stroke="#e9cd6c"/>
<rect x="129.1" y="72.5" width="2" height="6" fill="#f2cd58" stroke="#e8c660" stroke-width="0.8"/>
<path d="M140.5 69.6 L143.5 72.5 L140.5 75.4" fill="none" stroke="#7a7a7a" stroke-width="1.6"/>
<path d="M202.5 69.6 L205.5 72.5 L202.5 75.4" fill="none" stroke="#7a7a7a" stroke-width="1.6"/>
<path d="M257.5 69.6 L260.5 72.5 L257.5 75.4" fill="none" stroke="#7a7a7a" stroke-width="1.6"/>
<path d="M417.6 71.2 L421.9 75.4 L426.2 71.2" fill="none" stroke="#6a6a6a" stroke-width="1.5"/>
<path d="M442.3 70.3 A4.3 4.3 0 1 1 437.6 68.9" fill="none" stroke="#707070" stroke-width="1.4"/>
<path d="M435.3 67.6 H439.5 V71.6" fill="none" stroke="#707070" stroke-width="1.4"/>
<!-- search box -->
<rect x="459.5" y="61.5" width="201" height="21" fill="#fff" stroke="#d9d9d9"/>
<circle cx="648.1" cy="70.9" r="3.1" fill="none" stroke="#6e6e6e" stroke-width="1.6"/>
<line x1="645.8" y1="73.3" x2="641.6" y2="77.5" stroke="#6e6e6e" stroke-width="1.6"/>
</svg>
<div class="t" style="left:117px;top:9px;letter-spacing:0.28px;color:#000">MyMusic</div>
<div class="t" style="left:27px;top:36px;letter-spacing:-0.43px;color:#fff">File</div>
<div class="t" style="left:78px;top:36px;letter-spacing:-0.63px;color:#333">Home</div>
<div class="t" style="left:137px;top:36px;letter-spacing:-1.0px;color:#333">Share</div>
<div class="t" style="left:195px;top:36px;letter-spacing:-0.5px;color:#333">View</div>
<div class="t" style="left:154px;top:65px;letter-spacing:-0.63px;">This PC</div>
<div class="t" style="left:216px;top:65px;letter-spacing:0.25px;">Music</div>
<div class="t" style="left:271px;top:65px;letter-spacing:0.35px;">MyMusic</div>
<div class="t" style="left:468px;top:65px;letter-spacing:-0.08px;color:#6d6d6d">Search MyMusic</div>

<!-- nav pane -->
<div class="a" style="left:8px;top:170px;width:156px;height:24px;background:#d9d9d9"></div>
<div class="a" style="left:166px;top:90px;width:1px;height:587px;background:#f4f4f4"></div>
<svg class="a" style="left:0;top:100px" width="680" height="130" viewBox="0 100 680 130">
<!-- quick access star -->
<path d="M43.5 112.5 L44.4 116.3 L47.6 116.4 L44.8 119.3 L43.8 123 L40.6 121 L36.5 123 L39 119.2 L36.2 116.4 L40.7 116.3 Z" fill="#18acf0" stroke="#1478b8" stroke-width="0.8" stroke-linejoin="round"/>
<path d="M39.2 112.6 H41.6 M38.2 114.6 H40.6 M34.6 119.4 H37.4 M33.9 121.6 H36.4" stroke="#3a90c8" stroke-width="0.7" opacity="0.8"/>
<!-- onedrive folder -->
<rect x="34.5" y="142.5" width="11" height="15" fill="#fde68c" stroke="#e9cd6c"/>
<rect x="44.1" y="151.5" width="2" height="6" fill="#f2cd58" stroke="#e8c660" stroke-width="0.8"/>
<!-- this pc -->
<rect x="32.5" y="175.5" width="15" height="9" fill="#2cc0f8" stroke="#0e6a98"/>
<line x1="36" y1="187" x2="44" y2="187" stroke="#7a8a9a"/>
<line x1="32" y1="189.5" x2="48" y2="189.5" stroke="#7a8a9a"/>
<!-- network -->
<circle cx="42.6" cy="211.2" r="5.3" fill="#1488c0"/>
<path d="M38.5 208 Q41.5 207.5 42 210 Q40.5 211.5 38.6 211 M43.5 206.5 Q46.5 207.5 47.6 210.5" stroke="#8ae0fa" fill="none" stroke-width="0.9"/>
<rect x="32.5" y="212.5" width="11" height="7" fill="#22b6f2" stroke="#0b6a9a"/>
<line x1="35" y1="221.5" x2="41" y2="221.5" stroke="#6a7480"/>
</svg>
<div class="t" style="left:53px;top:111px;letter-spacing:-0.3px;">Quick access</div>
<div class="t" style="left:53px;top:143px;letter-spacing:-0.33px;">OneDrive</div>
<div class="t" style="left:53px;top:175px;letter-spacing:-0.57px;">This PC</div>
<div class="t" style="left:53px;top:207px;letter-spacing:0.25px;">Network</div>
<!-- files -->
<div class="a" style="left:182px;top:96px;width:167px;height:20px;background:#c6e8f9;border:1px solid #92cdea"></div>
<svg class="a" style="left:180px;top:95px" width="30" height="64" viewBox="180 95 30 64">
<defs>
<linearGradient id="disc" x1="0" y1="0" x2="1" y2="1">
<stop offset="0" stop-color="#e09050"/>
<stop offset="0.45" stop-color="#5a2a20"/>
<stop offset="1" stop-color="#3a1a50"/>
</linearGradient>
<g id="mf">
<path d="M0.5 0.5 H8.5 L11.5 3.5 V15.5 H0.5 Z" fill="#fff" stroke="#8a8a8a"/>
<path d="M8.5 0.5 V3.5 H11.5" fill="none" stroke="#8a8a8a"/>
<circle cx="6" cy="9" r="4" fill="url(#disc)" opacity="0.9"/>
<circle cx="6" cy="9" r="2.4" fill="#2a1418"/>
<circle cx="6" cy="9" r="1.1" fill="#fff"/>
</g>
</defs>
<use href="#mf" x="188" y="98"/>
<use href="#mf" x="188" y="119"/>
<use href="#mf" x="188" y="140"/>
</svg>
<div class="t" style="left:204px;top:99px;letter-spacing:-0.12px;color:#000">Maid With The Flaxen Hair</div>
<div class="t" style="left:204px;top:120px;letter-spacing:-0.27px;">New Stories</div>
<div class="t" style="left:204px;top:141px;letter-spacing:-0.46px;">Sleep Away</div>
<!-- status bar -->
<div class="a" style="left:70px;top:681px;width:1px;height:16px;background:#f0f0f0"></div>
<div class="a" style="left:211px;top:681px;width:1px;height:16px;background:#f0f0f0"></div>
<div class="t" style="left:22px;top:683px;letter-spacing:-0.22px;color:#1e2a3a">3 items</div>
<div class="t" style="left:82px;top:683px;letter-spacing:-0.15px;color:#1e2a3a">1 item selected</div>
<div class="t" style="left:166px;top:683px;letter-spacing:-0.82px;color:#1e2a3a">190 KB</div>
<svg class="a" style="left:620px;top:676px" width="54" height="26" viewBox="620 676 54 26">
<rect x="628.5" y="682.5" width="4" height="4" fill="#fff" stroke="#8a8a8a"/><rect x="628.5" y="686.5" width="4" height="4" fill="#fff" stroke="#8a8a8a"/><rect x="628.5" y="690.5" width="4" height="4" fill="#fff" stroke="#8a8a8a"/>
<rect x="630" y="684" width="1" height="1" fill="#333"/>
<rect x="630" y="688" width="1" height="1" fill="#3a9ad8"/>
<rect x="630" y="692" width="1" height="1" fill="#d03030"/>
<path d="M634 684.5 H638 M640 684.5 H644 M634 688.5 H638 M640 688.5 H644 M634 692.5 H638 M640 692.5 H644" stroke="#6a6a6a"/>
<rect x="651.5" y="683.5" width="13" height="10" fill="#fff" stroke="#8a8a8a"/>
<rect x="653" y="685" width="10" height="7" fill="#6ab0d8"/>
<path d="M653 692 V689 Q656 686.5 659 689.5 Q661 691 663 690 V692 Z" fill="#2a6050"/>
</svg>
<div id="tb"></div>
<svg class="a" style="left:0;top:728px" width="1366" height="40" viewBox="0 728 1366 40">
<defs>
<linearGradient id="fyel" x1="0" y1="0" x2="0" y2="1"><stop offset="0" stop-color="#ffe27a"/><stop offset="1" stop-color="#fcc63c"/></linearGradient>
<linearGradient id="ieg" x1="0" y1="0" x2="0" y2="1"><stop offset="0" stop-color="#5fe0ff"/><stop offset="1" stop-color="#10a0e8"/></linearGradient>
<radialGradient id="itg" cx="0.45" cy="0.4" r="0.65"><stop offset="0" stop-color="#ffffff"/><stop offset="0.8" stop-color="#fbfaff"/><stop offset="1" stop-color="#efe6fa"/></radialGradient>
<linearGradient id="note" x1="0" y1="0" x2="1" y2="1"><stop offset="0" stop-color="#f83a6a"/><stop offset="0.5" stop-color="#b04ae0"/><stop offset="1" stop-color="#3a8ef0"/></linearGradient>
</defs>
<!-- start -->
<g fill="#fff">
<polygon points="16,741.6 22,740.8 22,747 16,747"/>
<polygon points="23.1,740.6 32.1,739.6 32.1,747 23.1,747"/>
<polygon points="16,748 22,748 22,755 16,754.3"/>
<polygon points="23.1,748 32.1,748 32.1,756 23.1,755.2"/>
</g>
<!-- search -->
<circle cx="74.4" cy="745.4" r="4.8" fill="none" stroke="#fff" stroke-width="1.1"/>
<line x1="71" y1="748.8" x2="64.6" y2="755.2" stroke="#fff" stroke-width="1.2" stroke-linecap="round"/>
<!-- cortana -->
<circle cx="120.2" cy="747.9" r="6.4" fill="none" stroke="#fff" stroke-width="2"/>
<!-- explorer active -->
<rect x="147" y="728" width="48" height="40" fill="#333"/>
<rect x="147" y="766" width="48" height="2" fill="#76b9ed"/>
<path d="M160 738.5 H168.5 L170 740 H181.5 V756.3 H160 Z" fill="url(#fyel)"/>
<path d="M160 738.5 H168.5 L170.5 741.5 H160 Z" fill="#e8a21e"/>
<path d="M164.3 757.5 V751 Q164.3 748.8 166.5 748.8 H175.3 Q177.5 748.8 177.5 751 V757.5 H174.2 V752.2 H167.6 V757.5 Z" fill="#1a8ad8"/>
<rect x="167.6" y="752.2" width="6.6" height="4.5" fill="#f8c840"/>
<!-- IE -->
<path d="M229.8 749.5 H215.6 Q216.2 753.8 220.8 753.8 Q224.2 753.8 226 751.6 H230.2 Q227.8 757.7 220.6 757.7 Q211 757.7 211 748.2 Q211 738.8 220.6 738.8 Q230.2 738.8 229.8 749.5 Z M215.8 745.8 H225.6 Q225.2 742.6 220.7 742.6 Q216.4 742.6 215.8 745.8 Z" fill="url(#ieg)" fill-rule="evenodd"/>
<path d="M211.5 757 Q206.5 753 213.5 743.5 Q221 734.5 229.5 736 Q232.5 738 229.5 742.5" fill="none" stroke="#f2bd2a" stroke-width="2"/>
<!-- chrome -->
<circle cx="268.9" cy="748" r="11" fill="#e8453c"/>
<path d="M268.9 748 L259.4 753.5 A11 11 0 0 0 268.9 759 Z M268.9 748 L278.4 742.5 A11 11 0 0 1 268.9 759 L274.4 751 Z" fill="#f9bb2d"/>
<path d="M268.9 748 L259.4 742.5 L257.9 748 A11 11 0 0 0 268.9 759 L274.4 751.2 Z" fill="#34a853"/>
<path d="M268.9 748 L278.4 742.5 A11 11 0 0 1 268.9 759 L274.4 751.2 Z" fill="#fbc02d"/>
<path d="M259.5 742.5 A11 11 0 0 1 278.4 742.5 H268.9 L264.1 745.2 Z" fill="#ea4335"/>
<circle cx="268.9" cy="748" r="5" fill="#fff"/>
<circle cx="268.9" cy="748" r="3.9" fill="#1a73e8"/>
<!-- itunes -->
<circle cx="317.9" cy="748.2" r="10.8" fill="url(#itg)"/>
<circle cx="317.9" cy="748.2" r="10.4" fill="none" stroke="url(#note)" stroke-width="0.9" opacity="0.7"/>
<path d="M314.5 752.5 V742 L322.6 740.4 V750.8" fill="none" stroke="url(#note)" stroke-width="1.5"/>
<ellipse cx="312.9" cy="752.8" rx="2" ry="1.6" fill="#9a50e0"/>
<ellipse cx="321" cy="751.1" rx="2" ry="1.6" fill="#3a8ef0"/>
<!-- tray -->
<path d="M1117.5 751 L1123.2 745 L1128.9 751" fill="none" stroke="#fff" stroke-width="1.1"/>
<rect x="1140.5" y="744.5" width="13" height="8" fill="none" stroke="#fff" stroke-width="1"/>
<rect x="1142" y="746" width="10" height="5" fill="#fff"/>
<rect x="1154" y="746.5" width="1.2" height="4" fill="#fff"/>
<path d="M1163.5 745.5 H1166 L1170 741.8 V754.5 L1166 751 H1163.5 Z" fill="none" stroke="#fff" stroke-width="1"/>
<path d="M1172.5 745.5 Q1174 748.2 1172.5 751" fill="none" stroke="#fff" stroke-width="1"/>
<path d="M1175 743 Q1178 748.2 1175 753.5" fill="none" stroke="#bbb" stroke-width="1"/>
<path d="M1177.6 741 Q1181.6 748.2 1177.6 755.4" fill="none" stroke="#888" stroke-width="1"/>
<path d="M1190.8 755 Q1191.5 743.5 1202.5 742.8" fill="none" stroke="#fff" stroke-width="1"/>
<path d="M1193.6 755 Q1194.2 746.3 1202.5 745.6" fill="none" stroke="#fff" stroke-width="1"/>
<path d="M1196.4 755 Q1197 749.2 1202.5 748.5" fill="none" stroke="#fff" stroke-width="1"/>
<circle cx="1200.8" cy="753.6" r="1.6" fill="#fff"/>
<path d="M1325.5 740.5 H1341 V752.5 H1336 L1333.2 755.2 L1330.4 752.5 H1325.5 Z" fill="none" stroke="#fff" stroke-width="1"/>
<line x1="1361.5" y1="728" x2="1361.5" y2="768" stroke="#555"/>
</svg>
</body></html>
